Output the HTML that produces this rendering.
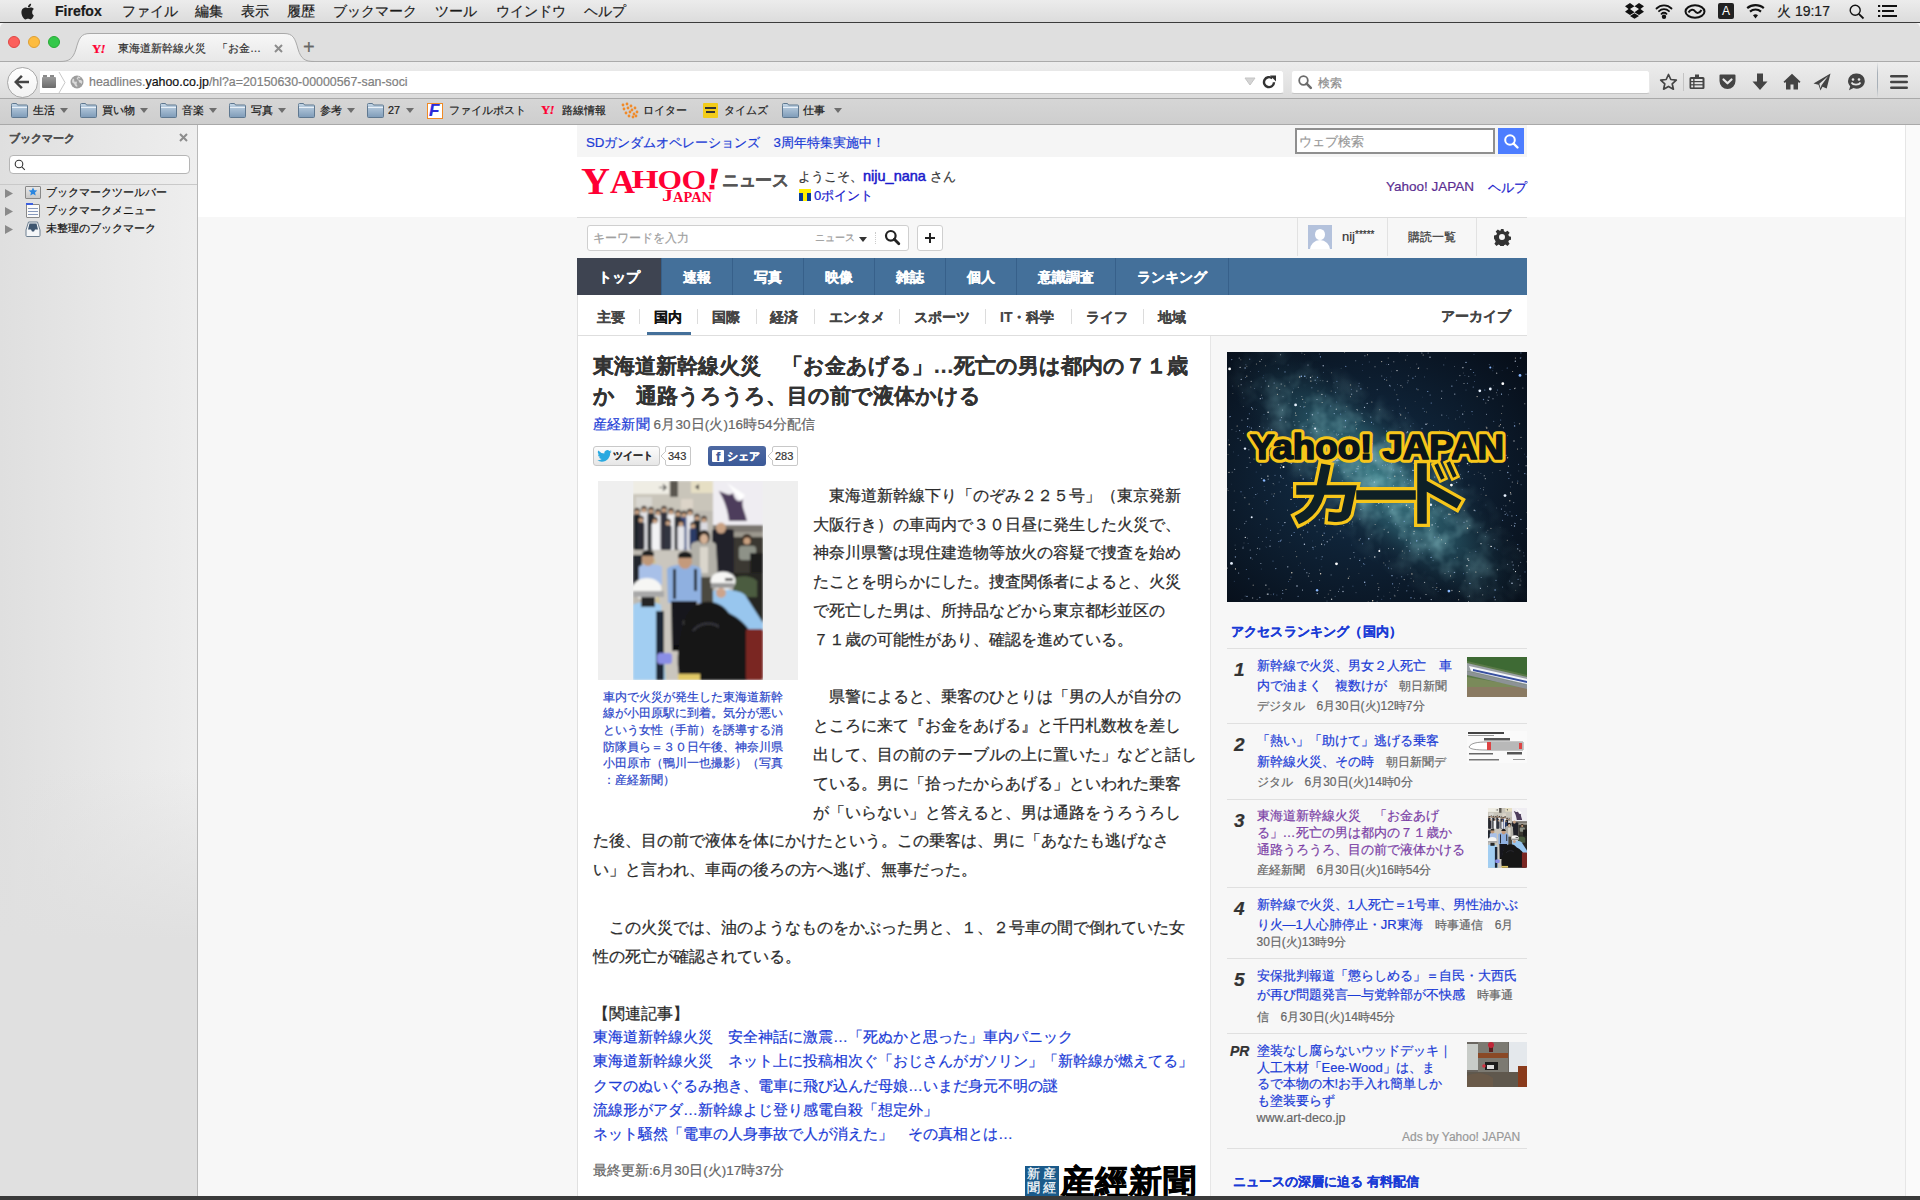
<!DOCTYPE html>
<html><head><meta charset="utf-8">
<style>
*{margin:0;padding:0;box-sizing:border-box}
html,body{width:1920px;height:1200px;overflow:hidden;background:#f7f7f7;font-family:"Liberation Sans",sans-serif;color:#333}
.a{position:absolute}
.t{position:absolute;white-space:nowrap}
.j{position:absolute;white-space:nowrap;text-align:justify;text-align-last:justify}
.t,.j{-webkit-text-stroke-width:0.2px}
/* menu bar */
#menubar{left:0;top:0;width:1920px;height:23px;background:linear-gradient(#ececec,#dcdcdc);border-bottom:1px solid #3b3b3b}
#menubar .t,#menubar .j{top:3px;font-size:14px;color:#1a1a1a;line-height:16px}
/* chrome */
#tabstrip{left:0;top:23px;width:1920px;height:39px;background:#dfdfdf;border-top-left-radius:5px;border-top-right-radius:5px}
#navbar{left:0;top:61px;width:1920px;height:38px;background:linear-gradient(#ededed,#dcdcdc);border-top:1px solid #b9b9b9;border-bottom:1px solid #a9a9a9}
#bmbar{left:0;top:99px;width:1920px;height:26px;background:linear-gradient(#d6d6d6,#cecece);border-bottom:1px solid #a9a9a9}
#sidebar{left:0;top:125px;width:198px;height:1071px;background:linear-gradient(rgba(224,224,224,0) 0,rgba(224,224,224,0) 60%,#e0e0e0 76%),linear-gradient(90deg,#dfdfdf,#eeeeee);border-right:1px solid #b9b9b9}
#bottom{left:0;top:1196px;width:1920px;height:4px;background:#3a3a3a}
#page{left:198px;top:125px;width:1707px;height:1071px;background:#f7f7f7;overflow:hidden}
#scroll{left:1905px;top:125px;width:15px;height:1071px;background:#fafafa;border-left:1px solid #e6e6e6}
</style></head><body>
<div id="menubar" class="a">
  <div class="t" style="left:55px;font-weight:bold">Firefox</div>
  <div class="j" style="left: 122px; width: 56px;">ファイル</div>
  <div class="j" style="left: 195px; width: 28px;">編集</div>
  <div class="j" style="left: 241px; width: 28px;">表示</div>
  <div class="j" style="left: 287px; width: 28px;">履歴</div>
  <div class="j" style="left: 333px; width: 84px;">ブックマーク</div>
  <div class="j" style="left: 435px; width: 42px;">ツール</div>
  <div class="j" style="left: 496px; width: 70px;">ウインドウ</div>
  <div class="j" style="left: 584px; width: 42px;">ヘルプ</div>
  <div class="j" style="left: 1777px; width: 52.94px;">火 19:17</div>
</div>
<div id="tabstrip" class="a"></div>
<div id="navbar" class="a"></div>
<div id="bmbar" class="a"></div>
<div id="sidebar" class="a"></div>

<!-- menubar icons -->
<svg class="a" style="left:19px;top:3px" width="16" height="17" viewBox="0 0 16 17"><path fill="#222" d="M13.2 9c0-2 1.6-2.9 1.7-3-1-1.4-2.4-1.6-2.9-1.6-1.2-.1-2.4.7-3 .7s-1.6-.7-2.6-.7C5 4.5 3.8 5.3 3.1 6.5 1.7 9 2.8 12.6 4.1 14.5c.7.9 1.4 2 2.4 1.9 1-.1 1.3-.6 2.5-.6s1.5.6 2.5.6 1.7-1 2.3-1.9c.7-1.1 1-2.1 1-2.2 0 0-2-.8-1.6-3.3zM11.3 3.2c.5-.7.9-1.6.8-2.5-.8 0-1.8.5-2.3 1.2-.5.6-1 1.5-.8 2.4.9.1 1.8-.4 2.3-1.1z"></path></svg>
<svg class="a" style="left:1625px;top:3px" width="19" height="17" viewBox="0 0 19 17"><path fill="#111" d="M5 0 0 3.3 3.5 6 0 8.8l5 3.3 4.5-2.8L5 6l4.5-2.8zM14 0 9.5 3.2 14 6l-4.5 3.3L14 12l5-3.2L15.5 6 19 3.3zM5 13l4.5 2.8L14 13l-4.5-2.8z"></path></svg>
<svg class="a" style="left:1655px;top:3px" width="18" height="17" viewBox="0 0 18 17"><g fill="none" stroke="#111" stroke-width="1.8" stroke-linecap="round"><path d="M1.5 5.5a10.5 10.5 0 0 1 15 0"></path><path d="M4 8.2a7 7 0 0 1 10 0"></path><path d="M6.5 10.8a3.5 3.5 0 0 1 5 0"></path></g><circle cx="9" cy="13.8" r="2.2" fill="#111"></circle></svg>
<svg class="a" style="left:1684px;top:4px" width="22" height="15" viewBox="0 0 22 15"><g fill="none" stroke="#111" stroke-width="2"><ellipse cx="11" cy="7.5" rx="9.5" ry="6.3"></ellipse><path d="M4.5 8.5c2-3.5 5-3.5 6.5-1.2s4.5 2.3 6.5-1.2"></path></g></svg>
<div class="a" style="left:1718px;top:3px;width:16px;height:16px;background:#222;border-radius:2px;color:#fff;font-size:12px;line-height:16px;text-align:center">A</div>
<svg class="a" style="left:1745px;top:3px" width="21" height="16" viewBox="0 0 21 16"><path fill="#111" d="M10.5 15.5 13 12.3a4 4 0 0 0-5 0zM10.5 7.6a7.4 7.4 0 0 1 4.8 1.8l1.4-1.7a9.7 9.7 0 0 0-12.4 0l1.4 1.7a7.4 7.4 0 0 1 4.8-1.8zM10.5 3.2c2.9 0 5.5 1 7.6 2.8l1.4-1.7A14 14 0 0 0 10.5 1a14 14 0 0 0-9 3.3L2.9 6a11.6 11.6 0 0 1 7.6-2.8z"></path></svg>
<svg class="a" style="left:1849px;top:4px" width="16" height="16" viewBox="0 0 16 16"><g fill="none" stroke="#111" stroke-width="1.4"><circle cx="6.2" cy="6.2" r="5"></circle><path d="M9.8 9.8 14.5 14.5" stroke-width="1.8"></path></g></svg>
<svg class="a" style="left:1878px;top:5px" width="20" height="12" viewBox="0 0 20 12"><g fill="#111"><rect x="0" y="0" width="2.2" height="2"></rect><rect x="0" y="5" width="2.2" height="2"></rect><rect x="0" y="10" width="2.2" height="2"></rect><rect x="4" y="0" width="15" height="2"></rect><rect x="4" y="5" width="12" height="2"></rect><rect x="4" y="10" width="15" height="2"></rect></g></svg>
<svg class="a" style="left:11px;top:103px" width="17" height="15" viewBox="0 0 17 15"><defs><linearGradient id="fg11" x1="0" y1="0" x2="0" y2="1"><stop offset="0" stop-color="#c4d6e6"></stop><stop offset="1" stop-color="#7e9bb8"></stop></linearGradient></defs><path d="M.5 2.5V1.5A1 1 0 0 1 1.5.5h4l1 1.5h9a1 1 0 0 1 1 1v10.5a1 1 0 0 1-1 1h-14a1 1 0 0 1-1-1z" fill="url(#fg11)" stroke="#5f7890" stroke-width="1"></path><path d="M1 4.5h15" stroke="#e8f0f8" stroke-width="1"></path></svg><div class="j" style="left: 33px; top: 104px; font-size: 10.8px; color: rgb(26, 26, 26); width: 22px;">生活</div><svg class="a" style="left:60px;top:108px" width="8" height="5" viewBox="0 0 8 5"><path d="M0 0h8L4 5z" fill="#6e6e6e"></path></svg><svg class="a" style="left:80px;top:103px" width="17" height="15" viewBox="0 0 17 15"><defs><linearGradient id="fg80" x1="0" y1="0" x2="0" y2="1"><stop offset="0" stop-color="#c4d6e6"></stop><stop offset="1" stop-color="#7e9bb8"></stop></linearGradient></defs><path d="M.5 2.5V1.5A1 1 0 0 1 1.5.5h4l1 1.5h9a1 1 0 0 1 1 1v10.5a1 1 0 0 1-1 1h-14a1 1 0 0 1-1-1z" fill="url(#fg80)" stroke="#5f7890" stroke-width="1"></path><path d="M1 4.5h15" stroke="#e8f0f8" stroke-width="1"></path></svg><div class="j" style="left: 102px; top: 104px; font-size: 10.8px; color: rgb(26, 26, 26); width: 33px;">買い物</div><svg class="a" style="left:140px;top:108px" width="8" height="5" viewBox="0 0 8 5"><path d="M0 0h8L4 5z" fill="#6e6e6e"></path></svg><svg class="a" style="left:160px;top:103px" width="17" height="15" viewBox="0 0 17 15"><defs><linearGradient id="fg160" x1="0" y1="0" x2="0" y2="1"><stop offset="0" stop-color="#c4d6e6"></stop><stop offset="1" stop-color="#7e9bb8"></stop></linearGradient></defs><path d="M.5 2.5V1.5A1 1 0 0 1 1.5.5h4l1 1.5h9a1 1 0 0 1 1 1v10.5a1 1 0 0 1-1 1h-14a1 1 0 0 1-1-1z" fill="url(#fg160)" stroke="#5f7890" stroke-width="1"></path><path d="M1 4.5h15" stroke="#e8f0f8" stroke-width="1"></path></svg><div class="j" style="left: 182px; top: 104px; font-size: 10.8px; color: rgb(26, 26, 26); width: 22px;">音楽</div><svg class="a" style="left:209px;top:108px" width="8" height="5" viewBox="0 0 8 5"><path d="M0 0h8L4 5z" fill="#6e6e6e"></path></svg><svg class="a" style="left:229px;top:103px" width="17" height="15" viewBox="0 0 17 15"><defs><linearGradient id="fg229" x1="0" y1="0" x2="0" y2="1"><stop offset="0" stop-color="#c4d6e6"></stop><stop offset="1" stop-color="#7e9bb8"></stop></linearGradient></defs><path d="M.5 2.5V1.5A1 1 0 0 1 1.5.5h4l1 1.5h9a1 1 0 0 1 1 1v10.5a1 1 0 0 1-1 1h-14a1 1 0 0 1-1-1z" fill="url(#fg229)" stroke="#5f7890" stroke-width="1"></path><path d="M1 4.5h15" stroke="#e8f0f8" stroke-width="1"></path></svg><div class="j" style="left: 251px; top: 104px; font-size: 10.8px; color: rgb(26, 26, 26); width: 22px;">写真</div><svg class="a" style="left:278px;top:108px" width="8" height="5" viewBox="0 0 8 5"><path d="M0 0h8L4 5z" fill="#6e6e6e"></path></svg><svg class="a" style="left:298px;top:103px" width="17" height="15" viewBox="0 0 17 15"><defs><linearGradient id="fg298" x1="0" y1="0" x2="0" y2="1"><stop offset="0" stop-color="#c4d6e6"></stop><stop offset="1" stop-color="#7e9bb8"></stop></linearGradient></defs><path d="M.5 2.5V1.5A1 1 0 0 1 1.5.5h4l1 1.5h9a1 1 0 0 1 1 1v10.5a1 1 0 0 1-1 1h-14a1 1 0 0 1-1-1z" fill="url(#fg298)" stroke="#5f7890" stroke-width="1"></path><path d="M1 4.5h15" stroke="#e8f0f8" stroke-width="1"></path></svg><div class="j" style="left: 320px; top: 104px; font-size: 10.8px; color: rgb(26, 26, 26); width: 22px;">参考</div><svg class="a" style="left:347px;top:108px" width="8" height="5" viewBox="0 0 8 5"><path d="M0 0h8L4 5z" fill="#6e6e6e"></path></svg><svg class="a" style="left:367px;top:103px" width="17" height="15" viewBox="0 0 17 15"><defs><linearGradient id="fg367" x1="0" y1="0" x2="0" y2="1"><stop offset="0" stop-color="#c4d6e6"></stop><stop offset="1" stop-color="#7e9bb8"></stop></linearGradient></defs><path d="M.5 2.5V1.5A1 1 0 0 1 1.5.5h4l1 1.5h9a1 1 0 0 1 1 1v10.5a1 1 0 0 1-1 1h-14a1 1 0 0 1-1-1z" fill="url(#fg367)" stroke="#5f7890" stroke-width="1"></path><path d="M1 4.5h15" stroke="#e8f0f8" stroke-width="1"></path></svg><div class="t" style="left:388px;top:104px;font-size:10.8px;color:#1a1a1a">27</div><svg class="a" style="left:406px;top:108px" width="8" height="5" viewBox="0 0 8 5"><path d="M0 0h8L4 5z" fill="#6e6e6e"></path></svg><svg class="a" style="left:782px;top:103px" width="17" height="15" viewBox="0 0 17 15"><defs><linearGradient id="fg782" x1="0" y1="0" x2="0" y2="1"><stop offset="0" stop-color="#c4d6e6"></stop><stop offset="1" stop-color="#7e9bb8"></stop></linearGradient></defs><path d="M.5 2.5V1.5A1 1 0 0 1 1.5.5h4l1 1.5h9a1 1 0 0 1 1 1v10.5a1 1 0 0 1-1 1h-14a1 1 0 0 1-1-1z" fill="url(#fg782)" stroke="#5f7890" stroke-width="1"></path><path d="M1 4.5h15" stroke="#e8f0f8" stroke-width="1"></path></svg><div class="j" style="left: 803px; top: 104px; font-size: 10.8px; color: rgb(26, 26, 26); width: 22px;">仕事</div><svg class="a" style="left:834px;top:108px" width="8" height="5" viewBox="0 0 8 5"><path d="M0 0h8L4 5z" fill="#6e6e6e"></path></svg><div class="a" style="left:427px;top:103px;width:16px;height:16px;background:#fff;border:1.5px solid #f08a24"></div><div class="t" style="left:429px;top:101px;font-size:17px;font-weight:bold;color:#2a2ad8;font-style:italic">F</div><div class="j" style="left: 449px; top: 104px; font-size: 10.8px; color: rgb(26, 26, 26); width: 77px;">ファイルポスト</div><div class="t" style="left:541px;top:102px;font-family:'Liberation Serif';font-weight:bold;font-size:13px;color:#ff0033;letter-spacing:-1px">Y<i>!</i></div><div class="j" style="left: 562px; top: 104px; font-size: 10.8px; color: rgb(26, 26, 26); width: 44px;">路線情報</div><svg class="a" style="left:621px;top:102px" width="18" height="17" viewBox="0 0 18 17"><circle cx="2" cy="3" r="1.4" fill="#f08a2a"></circle><circle cx="6" cy="2" r="1.4" fill="#f08a2a"></circle><circle cx="10" cy="4" r="1.4" fill="#f08a2a"></circle><circle cx="3" cy="7" r="1.4" fill="#f08a2a"></circle><circle cx="7" cy="6" r="1.4" fill="#f08a2a"></circle><circle cx="11" cy="8" r="1.4" fill="#f08a2a"></circle><circle cx="14" cy="6" r="1.4" fill="#f08a2a"></circle><circle cx="5" cy="11" r="1.4" fill="#f08a2a"></circle><circle cx="9" cy="10" r="1.4" fill="#f08a2a"></circle><circle cx="13" cy="12" r="1.4" fill="#f08a2a"></circle><circle cx="16" cy="10" r="1.4" fill="#f08a2a"></circle><circle cx="8" cy="14" r="1.4" fill="#f08a2a"></circle><circle cx="12" cy="15" r="1.4" fill="#f08a2a"></circle><circle cx="15" cy="14" r="1.4" fill="#f08a2a"></circle></svg><div class="j" style="left: 643px; top: 104px; font-size: 10.8px; color: rgb(26, 26, 26); width: 44px;">ロイター</div><div class="a" style="left:703px;top:103px;width:15px;height:15px;background:#f2cc1a;border-radius:1px"></div><div class="a" style="left:705px;top:107px;width:11px;height:2px;background:#333"></div><div class="a" style="left:706px;top:111px;width:9px;height:2px;background:#333"></div><div class="j" style="left: 724px; top: 104px; font-size: 10.8px; color: rgb(26, 26, 26); width: 44px;">タイムズ</div>
<div class="j" style="left: 9px; top: 131px; font-size: 11px; color: rgb(80, 80, 80); font-weight: bold; width: 66px;">ブックマーク</div>
<svg class="a" style="left:179px;top:133px" width="9" height="9" viewBox="0 0 9 9"><path d="M1 1l7 7M8 1 1 8" stroke="#8c8c8c" stroke-width="2"></path></svg>
<div class="a" style="left:9px;top:155px;width:181px;height:19px;background:#fff;border:1px solid #b5b5b5;border-radius:4px"></div>
<svg class="a" style="left:14px;top:159px" width="12" height="12" viewBox="0 0 12 12"><g fill="none" stroke="#333" stroke-width="1.1"><circle cx="5" cy="5" r="3.8"></circle><path d="M7.8 7.8l3 3"></path></g></svg>
<div class="a" style="left:0;top:184px;width:197px;height:1px;background:#c9c9c9"></div>
<svg class="a" style="left:5px;top:189px" width="8" height="9" viewBox="0 0 8 9"><path d="M0 0l8 4.5L0 9z" fill="#8a8a8a"></path></svg><div class="a" style="left:25px;top:186px;width:16px;height:13px;background:linear-gradient(#e8e8e8,#c8c8c8);border:1px solid #888;border-radius:1px"></div><svg class="a" style="left:28px;top:187px" width="10" height="10" viewBox="0 0 10 10"><path d="M5 .5l1.3 2.8 3 .3-2.3 2 .7 3-2.7-1.6-2.7 1.6.7-3-2.3-2 3-.3z" fill="#2a86e0"></path></svg><div class="j" style="left: 46px; top: 186px; font-size: 10.8px; color: rgb(17, 17, 17); width: 121px;">ブックマークツールバー</div><svg class="a" style="left:5px;top:207px" width="8" height="9" viewBox="0 0 8 9"><path d="M0 0l8 4.5L0 9z" fill="#8a8a8a"></path></svg><div class="a" style="left:26px;top:204px;width:14px;height:14px;background:#fafafa;border:1px solid #888;border-radius:1px"></div><div class="a" style="left:26px;top:203px;width:7px;height:2px;background:#3b5fe0"></div><div class="a" style="left:28px;top:208px;width:10px;height:1px;background:#8899bb"></div><div class="a" style="left:28px;top:211px;width:10px;height:1px;background:#8899bb"></div><div class="a" style="left:28px;top:214px;width:10px;height:1px;background:#8899bb"></div><div class="j" style="left: 46px; top: 204px; font-size: 10.8px; color: rgb(17, 17, 17); width: 110px;">ブックマークメニュー</div><svg class="a" style="left:5px;top:225px" width="8" height="9" viewBox="0 0 8 9"><path d="M0 0l8 4.5L0 9z" fill="#8a8a8a"></path></svg><svg class="a" style="left:25px;top:221px" width="16" height="16" viewBox="0 0 16 16"><path d="M1 9l2.5-8h9L15 9v5.5a1 1 0 0 1-1 1H2a1 1 0 0 1-1-1z" fill="#f4f6f8" stroke="#6d7f90"></path><path d="M3 8.5h3l1 2h2l1-2h3L11.5 2.5h-7z" fill="#3e5670"></path></svg><div class="j" style="left: 46px; top: 222px; font-size: 10.8px; color: rgb(17, 17, 17); width: 110px;">未整理のブックマーク</div>
<!-- traffic lights -->
<div class="a" style="left:8px;top:36px;width:12px;height:12px;border-radius:50%;background:#fc605c;border:0.5px solid #df4744"></div>
<div class="a" style="left:28px;top:36px;width:12px;height:12px;border-radius:50%;background:#fdbc40;border:0.5px solid #de9f34"></div>
<div class="a" style="left:48px;top:36px;width:12px;height:12px;border-radius:50%;background:#34c84a;border:0.5px solid #27aa35"></div>
<!-- tab -->
<svg class="a" style="left:60px;top:32px" width="254" height="31" viewBox="0 0 254 31"><defs><linearGradient id="tg" x1="0" y1="0" x2="0" y2="1"><stop offset="0" stop-color="#f7f7f7"></stop><stop offset="1" stop-color="#e8e8e8"></stop></linearGradient></defs><path d="M0 29.5C9 29.5 13 27 16 17 19 6 21 1.5 30 1.5H224C233 1.5 235 6 238 17 241 27 245 29.5 254 29.5" fill="url(#tg)" stroke="#a9a9a9" stroke-width="1"></path></svg>
<div class="a" style="left:0;top:61px;width:60px;height:1px;background:#ababab"></div>
<div class="a" style="left:314px;top:61px;width:1606px;height:1px;background:#ababab"></div>
<div class="t" style="left:92px;top:41px;font-family:'Liberation Serif';font-weight:bold;font-size:13px;color:#ff0033;letter-spacing:-1px">Y<i>!</i></div>
<div class="j" style="left:118px;top:41px;width:143px;font-size:11px;color:#333">東海道新幹線火災　「お金…</div>
<svg class="a" style="left:274px;top:44px" width="9" height="9" viewBox="0 0 9 9"><path d="M1 1l7 7M8 1 1 8" stroke="#8c8c8c" stroke-width="2"></path></svg>
<div class="t" style="left:303px;top:36px;font-size:20px;color:#666">+</div>
<!-- nav -->
<div class="a" style="left:40px;top:70px;width:1244px;height:24px;background:#fff;border:1px solid #e8e8e8;border-bottom-color:#c4c4c4;border-radius:0 3px 3px 0;border-left:none"></div>
<div class="a" style="left:7px;top:67px;width:31px;height:31px;border-radius:50%;background:linear-gradient(#fff,#f2f2f2);border:1px solid #a8a8a8"></div>
<svg class="a" style="left:13px;top:74px" width="17" height="16" viewBox="0 0 17 16"><path fill="#444" d="M8 1 1 8l7 7 1.8-1.8L5.5 9.3H16V6.7H5.5l4.3-3.9z"></path></svg>
<div class="a" style="left:42px;top:77px;width:14px;height:11px;background:linear-gradient(#9a9a9a,#6a6a6a);border-radius:1px"></div>
<div class="a" style="left:43px;top:75px;width:4px;height:2px;background:#8a8a8a"></div><div class="a" style="left:50px;top:75px;width:4px;height:2px;background:#8a8a8a"></div>
<svg class="a" style="left:58px;top:71px" width="8" height="23" viewBox="0 0 8 23"><path d="M1 1l6 10.5L1 22" fill="none" stroke="#c8c8c8"></path></svg>
<svg class="a" style="left:70px;top:75px" width="14" height="14" viewBox="0 0 14 14"><circle cx="7" cy="7" r="6.5" fill="#9d9d9d"></circle><path fill="#d9d9d9" d="M3 3.5c1 .3 1.5 1 1.2 2-.3.8.8 1.5 1.5 1.2.9-.4 1.5.5 1.1 1.3-.4.9-.3 1.8.5 2.4.4.3.2 1-.3 1.3-1.2-.2-2.2-1-2.5-2.2-.2-.8-1-1.3-1.8-1.5C2 7.5 1.7 5 3 3.5zM8 1.2c1 .3 2.2 1 2.6 1.6-.3.6-1 .7-1.6.5-.7-.2-1.2.4-1 1C8.3 5 9.5 5 10.3 4.9c.9 0 1.6.6 2 1.4.1 1-.2 2-.7 2.8-.5-.6-.8-1.4-1.6-1.4-.9 0-1.2-1-1.2-1.7C8.6 5 7.7 4.6 7 4.2 6.4 3.7 6.8 2.6 7.4 2.5z"></path></svg>
<div class="t" style="left:89px;top:75px;font-size:12.4px;color:#808080">headlines.<span style="color:#111">yahoo.co.jp</span>/hl?a=20150630-00000567-san-soci</div>
<svg class="a" style="left:1244px;top:77px" width="12" height="9" viewBox="0 0 12 9"><path d="M1 1h10L6 8z" fill="#d4d4d4" stroke="#c4c4c4" stroke-width="1"></path></svg>
<svg class="a" style="left:1261px;top:74px" width="16" height="16" viewBox="0 0 16 16"><path d="M13 8.3A5 5 0 1 1 11.2 4.3" fill="none" stroke="#333" stroke-width="2.4"></path><path fill="#333" d="M9 1.5h6v6z"></path></svg>
<div class="a" style="left:1291px;top:70px;width:359px;height:24px;background:#fff;border:1px solid #e8e8e8;border-bottom-color:#c4c4c4;border-radius:3px"></div>
<svg class="a" style="left:1297px;top:74px" width="16" height="16" viewBox="0 0 16 16"><g fill="none" stroke="#6b6b6b"><circle cx="6.5" cy="6.5" r="4.3" stroke-width="1.8"></circle><path d="M9.6 9.6l4.2 4.2" stroke-width="2.6" stroke-linecap="round"></path></g></svg>
<div class="j" style="left: 1318px; top: 75px; font-size: 12px; color: rgb(141, 141, 141); width: 24px;">検索</div>
<!-- toolbar icons -->
<svg class="a" style="left:1659px;top:73px" width="19" height="18" viewBox="0 0 19 18"><path d="M9.5 1.5l2.3 5 5.5.6-4.1 3.7 1.2 5.4-4.9-2.8-4.9 2.8 1.2-5.4L1.7 7.1l5.5-.6z" fill="none" stroke="#444" stroke-width="1.7" stroke-linejoin="round"></path></svg>
<div class="a" style="left:1683px;top:73px;width:1px;height:18px;background:#c4c4c4"></div>
<svg class="a" style="left:1689px;top:73px" width="16" height="17" viewBox="0 0 16 17"><path fill="#444" d="M2 4h12a1.5 1.5 0 0 1 1.5 1.5v9A1.5 1.5 0 0 1 14 16H2A1.5 1.5 0 0 1 .5 14.5v-9A1.5 1.5 0 0 1 2 4zM6 1.5h4V4H6z"></path><g fill="#e6e6e6"><rect x="2.2" y="6" width="2" height="2"></rect><rect x="5.5" y="6" width="8" height="2"></rect><rect x="2.2" y="9.2" width="2" height="2"></rect><rect x="5.5" y="9.2" width="8" height="2"></rect><rect x="2.2" y="12.4" width="2" height="2"></rect><rect x="5.5" y="12.4" width="8" height="2"></rect></g></svg>
<svg class="a" style="left:1719px;top:74px" width="17" height="16" viewBox="0 0 17 16"><path fill="#444" d="M1.5 .5h14A1 1 0 0 1 16.5 1.5V7A8 8 0 0 1 .5 7V1.5a1 1 0 0 1 1-1z"></path><path d="M4.5 5.5l4 3.8 4-3.8" fill="none" stroke="#e8e8e8" stroke-width="2.2" stroke-linecap="round" stroke-linejoin="round"></path></svg>
<svg class="a" style="left:1752px;top:73px" width="16" height="18" viewBox="0 0 16 18"><path fill="#444" d="M5 .5h6v8h4.5L8 17 .5 8.5H5z"></path></svg>
<svg class="a" style="left:1783px;top:73px" width="18" height="17" viewBox="0 0 18 17"><path fill="#444" d="M9 .8 .5 8.8l1.3 1.3L3 9v7.5h4.5V11.5h3v5H15V9l1.2 1.1 1.3-1.3z"></path></svg>
<svg class="a" style="left:1813px;top:73px" width="18" height="18" viewBox="0 0 18 18"><path fill="#444" d="M17.5.5.5 10.5l5 1.2 2 5.8 2-3.8 4.2 1.8zM6.3 10.8 15 3.2 8.5 12.2 7.6 15.2z"></path></svg>
<svg class="a" style="left:1847px;top:73px" width="18" height="18" viewBox="0 0 18 18"><path fill="#444" d="M9 .5A8 7.6 0 0 0 1 8.1c0 2 .8 3.7 2.2 5.1L2 17.3l4.5-2.3A8 7.6 0 1 0 9 .5z"></path><circle cx="6" cy="6.5" r="1.3" fill="#e6e6e6"></circle><circle cx="12" cy="6.5" r="1.3" fill="#e6e6e6"></circle><path d="M4.5 9.5c1.5 2.8 7.5 2.8 9 0" fill="none" stroke="#e6e6e6" stroke-width="1.6"></path></svg>
<div class="a" style="left:1877px;top:62px;width:1px;height:36px;background:linear-gradient(rgba(180,180,180,0),#a8b0b8 30%,#a8b0b8 70%,rgba(180,180,180,0))"></div>
<svg class="a" style="left:1890px;top:75px" width="18" height="14" viewBox="0 0 18 14"><g fill="#444"><rect x="0" y="0" width="18" height="2.6" rx="1.3"></rect><rect x="0" y="5.7" width="18" height="2.6" rx="1.3"></rect><rect x="0" y="11.4" width="18" height="2.6" rx="1.3"></rect></g></svg>

<div id="page" class="a"></div>

<!-- PAGE -->
<div class="a" style="left:198px;top:125px;width:1707px;height:92px;background:#fff"></div>
<div class="a" style="left:577px;top:125px;width:950px;height:32px;background:#f5f5f5"></div>
<div class="j" style="left:586px;top:134px;width:295px;font-size:13.3px;color:#1a3bd6">SDガンダムオペレーションズ　3周年特集実施中！</div>
<div class="a" style="left:1295px;top:128px;width:200px;height:26px;background:#fff;border:2px solid #8f8f8f"></div>
<div class="j" style="left: 1299px; top: 133px; font-size: 13px; color: rgb(153, 153, 153); width: 65px;">ウェブ検索</div>
<div class="a" style="left:1498px;top:128px;width:26px;height:26px;background:#4d7dff"></div>
<svg class="a" style="left:1503px;top:133px" width="17" height="17" viewBox="0 0 17 17"><g fill="none" stroke="#fff"><circle cx="7" cy="7" r="4.8" stroke-width="2"></circle><path d="M10.5 10.5l4 4" stroke-width="2.4" stroke-linecap="round"></path></g></svg>
<!-- logo -->
<svg class="a" style="left:577px;top:160px" width="150" height="50" viewBox="577 160 150 50"><g fill="#ff0033" font-family="Liberation Serif" font-weight="bold">
<text x="581" y="193.7" font-size="38" textLength="29" lengthAdjust="spacingAndGlyphs">Y</text>
<text x="610" y="192.5" font-size="33" textLength="25" lengthAdjust="spacingAndGlyphs">A</text>
<text x="631.5" y="188" font-size="26" textLength="27" lengthAdjust="spacingAndGlyphs">H</text>
<text x="657.5" y="188.5" font-size="27" textLength="24.5" lengthAdjust="spacingAndGlyphs">O</text>
<text x="681.5" y="188.5" font-size="27" textLength="24.5" lengthAdjust="spacingAndGlyphs">O</text>
<path d="M711.5 168.8h6.7l-4.2 14.5h-3z"></path><rect x="709.6" y="184.8" width="4.8" height="4.6"></rect>
<text x="662" y="201" font-size="17" textLength="11" lengthAdjust="spacingAndGlyphs">J</text>
<text x="673" y="201.5" font-size="15" textLength="39" lengthAdjust="spacingAndGlyphs">APAN</text>
</g></svg>
<div class="j" style="left: 722px; top: 172px; font-size: 17px; line-height: 18px; font-weight: bold; color: rgb(85, 85, 85); letter-spacing: -0.5px; width: 66px;">ニュース</div>
<div class="j" style="left: 798px; top: 168px; font-size: 13.2px; color: rgb(51, 51, 51); width: 157.58px;">ようこそ、<span style="color:#1a1acc;font-size:14.5px;-webkit-text-stroke-width:0.5px">niju_nana</span> さん</div>
<div class="a" style="left:799px;top:189px;width:12px;height:12px;background:#ffee00"></div>
<div class="a" style="left:799px;top:193px;width:4px;height:8px;background:#0a3c9a"></div><div class="a" style="left:807px;top:193px;width:4px;height:8px;background:#0a3c9a"></div>
<div class="j" style="left: 814px; top: 187px; font-size: 13px; color: rgb(26, 26, 204); width: 59.23px;">0ポイント</div>
<div class="t" style="left:1386px;top:179px;font-size:13.5px;color:#5a2d91">Yahoo! JAPAN</div>
<div class="j" style="left: 1488px; top: 179px; font-size: 13px; color: rgb(26, 26, 204); width: 39px;">ヘルプ</div>
<!-- search row -->
<div class="a" style="left:577px;top:217px;width:950px;height:1px;background:#dcdcdc"></div>
<div class="a" style="left:587px;top:225px;width:322px;height:26px;background:#fff;border:1px solid #cfcfcf;border-radius:3px"></div>
<div class="j" style="left: 593px; top: 231px; font-size: 11.8px; color: rgb(160, 160, 160); width: 96px;">キーワードを入力</div>
<div class="j" style="left: 815px; top: 232px; font-size: 9.5px; color: rgb(154, 154, 154); width: 40px;">ニュース</div>
<svg class="a" style="left:859px;top:237px" width="8" height="5" viewBox="0 0 8 5"><path d="M0 0h8L4 5z" fill="#333"></path></svg>
<div class="a" style="left:875px;top:232px;width:1px;height:12px;border-left:1px dotted #cccccc"></div>
<svg class="a" style="left:884px;top:229px" width="17" height="17" viewBox="0 0 17 17"><g fill="none" stroke="#222"><circle cx="6.8" cy="6.8" r="4.8" stroke-width="2.2"></circle><path d="M10.3 10.3l4.5 4.5" stroke-width="2.8" stroke-linecap="round"></path></g></svg>
<div class="a" style="left:917px;top:225px;width:26px;height:26px;background:#fff;border:1px solid #cfcfcf;border-radius:3px"></div>
<div class="a" style="left:925px;top:237px;width:10px;height:2px;background:#222"></div><div class="a" style="left:929px;top:233px;width:2px;height:10px;background:#222"></div>
<div class="a" style="left:1297px;top:218px;width:1px;height:38px;background:#e2e2e2"></div>
<div class="a" style="left:1387px;top:218px;width:1px;height:38px;background:#e2e2e2"></div>
<div class="a" style="left:1476px;top:218px;width:1px;height:38px;background:#e2e2e2"></div>
<div class="a" style="left:1308px;top:225px;width:24px;height:24px;background:#b4c2dc;overflow:hidden"><div class="a" style="left:7px;top:4px;width:10px;height:11px;border-radius:50%;background:#fff"></div><div class="a" style="left:2px;top:15px;width:20px;height:14px;border-radius:10px 10px 0 0;background:#fff"></div></div>
<div class="t" style="left:1342px;top:229px;font-size:13px;color:#333">nij<span style="font-size:10px;vertical-align:3px">*****</span></div>
<div class="j" style="left: 1408px; top: 230px; font-size: 11.7px; color: rgb(51, 51, 51); width: 48px;">購読一覧</div>
<svg class="a" style="left:1493px;top:228px" width="18" height="18" viewBox="0 0 18 18"><path fill="#333" fill-rule="evenodd" d="M7.5 1h3l.5 2.3 1.5.7 2-1.3 2.1 2.1-1.3 2 .7 1.5 2.3.5v3l-2.3.5-.7 1.5 1.3 2-2.1 2.1-2-1.3-1.5.7-.5 2.3h-3l-.5-2.3-1.5-.7-2 1.3-2.1-2.1 1.3-2-.7-1.5L1 10.5v-3l2.3-.5.7-1.5-1.3-2 2.1-2.1 2 1.3 1.5-.7zM9 6a3 3 0 1 0 0 6 3 3 0 0 0 0-6z"></path></svg>
<!-- nav -->
<div class="a" style="left:577px;top:258px;width:950px;height:37px;background:#44709a"></div>
<div class="a" style="left:577px;top:258px;width:84px;height:37px;background:#3e4451"></div>
<div class="j" style="left: 598px; top: 269px; width: 42px; font-size: 14px; font-weight: bold; color: rgb(255, 255, 255);">トップ</div><div class="a" style="left:661px;top:258px;width:1px;height:37px;background:#37608a"></div><div class="j" style="left: 682.5px; top: 269px; width: 28px; font-size: 14px; font-weight: bold; color: rgb(255, 255, 255);">速報</div><div class="a" style="left:732px;top:258px;width:1px;height:37px;background:#37608a"></div><div class="j" style="left: 753.5px; top: 269px; width: 28px; font-size: 14px; font-weight: bold; color: rgb(255, 255, 255);">写真</div><div class="a" style="left:803px;top:258px;width:1px;height:37px;background:#37608a"></div><div class="j" style="left: 824.5px; top: 269px; width: 28px; font-size: 14px; font-weight: bold; color: rgb(255, 255, 255);">映像</div><div class="a" style="left:874px;top:258px;width:1px;height:37px;background:#37608a"></div><div class="j" style="left: 895.5px; top: 269px; width: 28px; font-size: 14px; font-weight: bold; color: rgb(255, 255, 255);">雑誌</div><div class="a" style="left:945px;top:258px;width:1px;height:37px;background:#37608a"></div><div class="j" style="left: 966.5px; top: 269px; width: 28px; font-size: 14px; font-weight: bold; color: rgb(255, 255, 255);">個人</div><div class="a" style="left:1016px;top:258px;width:1px;height:37px;background:#37608a"></div><div class="j" style="left: 1037.5px; top: 269px; width: 56px; font-size: 14px; font-weight: bold; color: rgb(255, 255, 255);">意識調査</div><div class="a" style="left:1115px;top:258px;width:1px;height:37px;background:#37608a"></div><div class="j" style="left: 1136.5px; top: 269px; width: 70px; font-size: 14px; font-weight: bold; color: rgb(255, 255, 255);">ランキング</div><div class="a" style="left:1228px;top:258px;width:1px;height:37px;background:#37608a"></div><div class="a" style="left:577px;top:295px;width:634px;height:40px;background:#fff"></div><div class="a" style="left:1211px;top:295px;width:316px;height:40px;background:#fff"></div><div class="j" style="left: 597px; top: 309px; font-size: 14px; font-weight: bold; color: rgb(68, 68, 68); width: 28px;">主要</div><div class="j" style="left: 654px; top: 309px; font-size: 14px; font-weight: bold; color: rgb(17, 17, 17); width: 28px;">国内</div><div class="j" style="left: 712px; top: 309px; font-size: 14px; font-weight: bold; color: rgb(68, 68, 68); width: 28px;">国際</div><div class="j" style="left: 770px; top: 309px; font-size: 14px; font-weight: bold; color: rgb(68, 68, 68); width: 28px;">経済</div><div class="j" style="left: 829px; top: 309px; font-size: 14px; font-weight: bold; color: rgb(68, 68, 68); width: 56px;">エンタメ</div><div class="j" style="left: 914px; top: 309px; font-size: 14px; font-weight: bold; color: rgb(68, 68, 68); width: 56px;">スポーツ</div><div class="j" style="left: 1000px; top: 309px; font-size: 14px; font-weight: bold; color: rgb(68, 68, 68); width: 54.45px;">IT・科学</div><div class="j" style="left: 1086px; top: 309px; font-size: 14px; font-weight: bold; color: rgb(68, 68, 68); width: 42px;">ライフ</div><div class="j" style="left: 1158px; top: 309px; font-size: 14px; font-weight: bold; color: rgb(68, 68, 68); width: 28px;">地域</div><div class="a" style="left:639px;top:309px;width:1px;height:15px;background:#dcdcdc"></div><div class="a" style="left:697px;top:309px;width:1px;height:15px;background:#dcdcdc"></div><div class="a" style="left:756px;top:309px;width:1px;height:15px;background:#dcdcdc"></div><div class="a" style="left:814px;top:309px;width:1px;height:15px;background:#dcdcdc"></div><div class="a" style="left:899px;top:309px;width:1px;height:15px;background:#dcdcdc"></div><div class="a" style="left:985px;top:309px;width:1px;height:15px;background:#dcdcdc"></div><div class="a" style="left:1071px;top:309px;width:1px;height:15px;background:#dcdcdc"></div><div class="a" style="left:1143px;top:309px;width:1px;height:15px;background:#dcdcdc"></div><div class="a" style="left:647px;top:332px;width:44px;height:4px;background:#44709a"></div><div class="j" style="left: 1441px; top: 308px; font-size: 14px; font-weight: bold; color: rgb(68, 68, 68); width: 70px;">アーカイブ</div><div class="a" style="left:577px;top:335px;width:950px;height:1px;background:#dedede"></div><div class="a" style="left:577px;top:336px;width:634px;height:860px;background:#fff;border-left:1px solid #e0e0e0;border-right:1px solid #e6e6e6"></div><div class="a" style="left:577px;top:295px;width:1px;height:41px;background:#e0e0e0"></div>
<!--ARTICLE-->
<div class="j" style="left:593px;top:350.5px;width:593.6px;font-size:21.2px;line-height:30px;color:#333;font-weight:bold">東海道新幹線火災　「お金あげる」…死亡の男は都内の７１歳</div>
<div class="j" style="left:593px;top:380.5px;width:381.6px;font-size:21.2px;line-height:30px;color:#333;font-weight:bold">か　通路うろうろ、目の前で液体かける</div>
<div class="j" style="left:593px;top:417.0px;width:222.0px;font-size:13.5px;line-height:16px;color:#666;"><span style="color:#1a3bd6">産経新聞</span> <span style="color:#666">6月30日(火)16時54分配信</span></div>
<div class="a" style="left:593px;top:446px;width:67px;height:20px;border:1px solid #c8c8c8;border-radius:3px;background:linear-gradient(#fdfdfd,#e6e6e6)"></div>
<svg class="a" style="left:597px;top:450px" width="15" height="12" viewBox="0 0 24 20"><path fill="#2aa9e0" d="M24 2.4a9.8 9.8 0 0 1-2.8.8A4.9 4.9 0 0 0 23.3.5a9.9 9.9 0 0 1-3.1 1.2A4.9 4.9 0 0 0 11.8 6 14 14 0 0 1 1.7.9a4.9 4.9 0 0 0 1.5 6.6A4.9 4.9 0 0 1 1 6.9a4.9 4.9 0 0 0 3.9 4.8 4.9 4.9 0 0 1-2.2.1 4.9 4.9 0 0 0 4.6 3.4A9.9 9.9 0 0 1 0 17.2 14 14 0 0 0 7.5 19.4c9.1 0 14-7.5 14-14v-.6A10 10 0 0 0 24 2.4z"></path></svg>
<div class="j" style="left: 613px; top: 449px; font-size: 10.4px; line-height: 14px; color: rgb(51, 51, 51); font-weight: bold; width: 40px;">ツイート</div>
<div class="a" style="left:665px;top:446px;width:26px;height:20px;border:1px solid #c8c8c8;border-radius:2px;background:#fff"></div>
<svg class="a" style="left:660px;top:451px" width="6" height="10" viewBox="0 0 6 10"><path d="M6 0 1 5l5 5" fill="#fff" stroke="#c8c8c8"></path></svg>
<div class="t" style="left:668px;top:449.0px;font-size:11px;line-height:14px;color:#333;">343</div>
<div class="a" style="left:708px;top:446px;width:58px;height:20px;border-radius:3px;background:linear-gradient(#4e69a2,#3b5998)"></div>
<div class="a" style="left:712px;top:450px;width:12px;height:12px;background:#fff;border-radius:1px"></div>
<div class="t" style="left:716px;top:450.0px;font-size:13px;line-height:14px;color:#3b5998;font-weight:bold"><b>f</b></div>
<div class="j" style="left: 727px; top: 448.5px; font-size: 10.8px; line-height: 14px; color: rgb(255, 255, 255); font-weight: bold; width: 33px;">シェア</div>
<div class="a" style="left:772px;top:446px;width:26px;height:20px;border:1px solid #c8c8c8;border-radius:2px;background:#fff"></div>
<svg class="a" style="left:767px;top:451px" width="6" height="10" viewBox="0 0 6 10"><path d="M6 0 1 5l5 5" fill="#fff" stroke="#c8c8c8"></path></svg>
<div class="t" style="left:775px;top:449.0px;font-size:11px;line-height:14px;color:#333;">283</div>
<div class="a" style="left:598px;top:481px;width:200px;height:199px;background:#efefef"></div>
<svg class="a" style="left:633px;top:481px" width="130" height="199" viewBox="0 0 130 199"><defs><filter id="bl" x="-5%" y="-5%" width="110%" height="110%"><feGaussianBlur stdDeviation="0.8"></feGaussianBlur></filter><clipPath id="pc"><rect width="130" height="199"></rect></clipPath></defs>
<g clip-path="url(#pc)"><g id="photoG" filter="url(#bl)">
<rect width="130" height="199" fill="#bdb9b1"></rect>
<rect width="80" height="30" fill="#c9c5ba"></rect>
<rect x="0" y="0" width="36" height="13" fill="#efede4"></rect><path d="M26 6.5h7m-3-3 3 3-3 3" stroke="#222" stroke-width="1.2" fill="none"></path>
<rect x="37" y="0" width="8" height="16" fill="#5a5650"></rect><rect x="58" y="0" width="22" height="12" fill="#e6dfc4"></rect><path d="M62 6l4-3v6z" fill="#333"></path>
<rect x="3" y="16" width="16" height="12" fill="#d8d6d0"></rect><rect x="48" y="18" width="12" height="10" fill="#dcd4c8"></rect>
<rect x="80" y="0" width="50" height="45" fill="#efedf2"></rect><path d="M86 10c4 8 8 14 10 30h18c-2-10-6-14-4-22-4 4-8 2-10-6-4 4-8 0-14-2z" fill="#4e3c5c"></path><path d="M94 2l18 12-4 6z" fill="#fff"></path>
<rect x="80" y="44" width="50" height="7" fill="#7a7670"></rect><rect x="80" y="51" width="50" height="26" fill="#9c988e"></rect>
<rect x="18" y="70" width="56" height="129" fill="#cac6be"></rect>
<path d="M22 78l12 121h-3L19 78z" fill="#d6c170" opacity="0.55"></path>
<rect x="0.5" y="33" width="7" height="36" rx="2" fill="#1f2228"></rect><ellipse cx="4" cy="30" rx="2.8" ry="3.3" fill="#2a2420"></ellipse><ellipse cx="4" cy="31.2" rx="2.3" ry="2.2" fill="#c9a284"></ellipse><rect x="7.5" y="31" width="7" height="38" rx="2" fill="#e4e4e8"></rect><ellipse cx="11" cy="28" rx="2.8" ry="3.3" fill="#2a2420"></ellipse><ellipse cx="11" cy="29.2" rx="2.3" ry="2.2" fill="#c9a284"></ellipse><rect x="14.5" y="32" width="7" height="37" rx="2" fill="#262a32"></rect><ellipse cx="18" cy="29" rx="2.8" ry="3.3" fill="#2a2420"></ellipse><ellipse cx="18" cy="30.2" rx="2.3" ry="2.2" fill="#c9a284"></ellipse><rect x="21.5" y="34" width="7" height="35" rx="2" fill="#eeeef0"></rect><ellipse cx="25" cy="31" rx="2.8" ry="3.3" fill="#2a2420"></ellipse><ellipse cx="25" cy="32.2" rx="2.3" ry="2.2" fill="#c9a284"></ellipse><rect x="27.5" y="31" width="7" height="38" rx="2" fill="#30333c"></rect><ellipse cx="31" cy="28" rx="2.8" ry="3.3" fill="#2a2420"></ellipse><ellipse cx="31" cy="29.2" rx="2.3" ry="2.2" fill="#c9a284"></ellipse><rect x="34.5" y="33" width="7" height="36" rx="2" fill="#f0f0f2"></rect><ellipse cx="38" cy="30" rx="2.8" ry="3.3" fill="#2a2420"></ellipse><ellipse cx="38" cy="31.2" rx="2.3" ry="2.2" fill="#c9a284"></ellipse><rect x="41.5" y="35" width="7" height="34" rx="2" fill="#2a2d36"></rect><ellipse cx="45" cy="32" rx="2.8" ry="3.3" fill="#2a2420"></ellipse><ellipse cx="45" cy="33.2" rx="2.3" ry="2.2" fill="#c9a284"></ellipse><rect x="47.5" y="36" width="7" height="33" rx="2" fill="#3c4e80"></rect><ellipse cx="51" cy="33" rx="2.8" ry="3.3" fill="#2a2420"></ellipse><ellipse cx="51" cy="34.2" rx="2.3" ry="2.2" fill="#c9a284"></ellipse><rect x="53.5" y="34" width="7" height="35" rx="2" fill="#e8e8ec"></rect><ellipse cx="57" cy="31" rx="2.8" ry="3.3" fill="#2a2420"></ellipse><ellipse cx="57" cy="32.2" rx="2.3" ry="2.2" fill="#c9a284"></ellipse><rect x="60.5" y="39" width="7" height="30" rx="2" fill="#22252c"></rect><ellipse cx="64" cy="36" rx="2.8" ry="3.3" fill="#2a2420"></ellipse><ellipse cx="64" cy="37.2" rx="2.3" ry="2.2" fill="#c9a284"></ellipse><rect x="67.5" y="41" width="7" height="28" rx="2" fill="#dcdce2"></rect><ellipse cx="71" cy="38" rx="2.8" ry="3.3" fill="#2a2420"></ellipse><ellipse cx="71" cy="39.2" rx="2.3" ry="2.2" fill="#c9a284"></ellipse><rect x="4.5" y="41" width="7" height="28" rx="2" fill="#2a2c34"></rect><ellipse cx="8" cy="38" rx="2.8" ry="3.3" fill="#2a2420"></ellipse><ellipse cx="8" cy="39.2" rx="2.3" ry="2.2" fill="#c9a284"></ellipse><rect x="18.5" y="42" width="7" height="27" rx="2" fill="#f2f2f4"></rect><ellipse cx="22" cy="39" rx="2.8" ry="3.3" fill="#2a2420"></ellipse><ellipse cx="22" cy="40.2" rx="2.3" ry="2.2" fill="#c9a284"></ellipse><rect x="31.5" y="44" width="7" height="25" rx="2" fill="#303440"></rect><ellipse cx="35" cy="41" rx="2.8" ry="3.3" fill="#2a2420"></ellipse><ellipse cx="35" cy="42.2" rx="2.3" ry="2.2" fill="#c9a284"></ellipse><rect x="44.5" y="45" width="7" height="24" rx="2" fill="#e6e6ea"></rect><ellipse cx="48" cy="42" rx="2.8" ry="3.3" fill="#2a2420"></ellipse><ellipse cx="48" cy="43.2" rx="2.3" ry="2.2" fill="#c9a284"></ellipse><rect x="56.5" y="47" width="7" height="22" rx="2" fill="#2c3a66"></rect><ellipse cx="60" cy="44" rx="2.8" ry="3.3" fill="#2a2420"></ellipse><ellipse cx="60" cy="45.2" rx="2.3" ry="2.2" fill="#c9a284"></ellipse>
<rect x="79" y="48" width="22" height="48" rx="3" fill="#20232b"></rect><ellipse cx="88" cy="47" rx="5" ry="5.5" fill="#c9a284"></ellipse>
<rect x="101" y="56" width="29" height="50" fill="#3a3833"></rect><ellipse cx="114" cy="58" rx="5" ry="5" fill="#3a2a20"></ellipse><ellipse cx="114" cy="60" rx="3.5" ry="3.5" fill="#c8a080"></ellipse><rect x="106" y="65" width="17" height="14" rx="3" fill="#8e9288"></rect><rect x="117" y="72" width="13" height="30" fill="#1c1c1c"></rect>
<path d="M58 64c2-6 24-6 25 0l2 34H56z" fill="#b2b0a8"></path><ellipse cx="71" cy="56" rx="6" ry="7" fill="#221c18"></ellipse><ellipse cx="71" cy="58" rx="4" ry="5" fill="#d6b296"></ellipse><rect x="67" y="66" width="8" height="26" fill="#dad6cc"></rect>
<rect x="0" y="74" width="9" height="36" fill="#24272e"></rect>
<path d="M6 86c2-4 20-4 23 0v18H6z" fill="#a8c0e8"></path><ellipse cx="15" cy="78" rx="6" ry="7" fill="#bf9878"></ellipse><path d="M9 72c2-4 10-4 12 0v3H9z" fill="#222"></path>
<path d="M34 88c4-6 30-6 34 0l2 34H35z" fill="#8fb0e0"></path><ellipse cx="52" cy="80" rx="7" ry="8" fill="#c49a7c"></ellipse><path d="M45 74c2-5 12-5 14 0v3H45z" fill="#1a1a1a"></path><rect x="40" y="88" width="3" height="30" fill="#1e1e1e"></rect><rect x="61" y="88" width="3" height="22" fill="#1e1e1e"></rect>
<path d="M38 120h26l-3 48h-8l-2-30-3 32h-9z" fill="#18181c"></path><rect x="40" y="164" width="10" height="6" rx="2" fill="#111"></rect>
<rect x="68" y="96" width="12" height="30" fill="#4c4840"></rect>
<rect x="100" y="92" width="30" height="62" fill="#262624"></rect><path d="M101 98c4-4 18-4 23 2v16h-23z" fill="#4c5c40"></path>
<ellipse cx="90" cy="100" rx="12.5" ry="9.5" fill="#f6f6f4"></ellipse><path d="M78 102h23v5H78z" fill="#9a9a9a"></path><rect x="92" y="97" width="8" height="3" fill="#555"></rect>
<path d="M80 110c6-2 26-2 32 4l18 28v20H90c-6-14-10-30-10-52z" fill="#98c6ee"></path><ellipse cx="88" cy="112" rx="5" ry="5" fill="#cca48c"></ellipse>
<ellipse cx="14" cy="108" rx="14.5" ry="11" fill="#f6f6f4"></ellipse><path d="M0 110h31v6H0z" fill="#a8a8a8"></path>
<path d="M0 124c4-4 24-4 28 0l5 75H0z" fill="#a2cef2"></path><rect x="8" y="116" width="14" height="10" fill="#262626"></rect><rect x="23" y="130" width="8" height="69" fill="#1a2636"></rect>
<rect x="24" y="172" width="15" height="11" rx="3" fill="#8a8ee6"></rect>
<path d="M52 138c8-22 34-22 44-6 12 6 24 16 28 36l2 31H47c-5-20-1-42 5-61z" fill="#141418"></path>
<path d="M60 150c6-8 18-10 26-4" stroke="#3a3a40" stroke-width="2" fill="none"></path>
<rect x="113" y="148" width="17" height="51" rx="2" fill="#7a2824"></rect>
<rect x="45" y="193" width="22" height="6" fill="#e0c866"></rect>
</g></g></svg>
<div class="j" style="left:603px;top:688.7px;width:180.0px;font-size:12px;line-height:16px;color:#2a45c8;">車内で火災が発生した東海道新幹</div>
<div class="j" style="left:603px;top:705.4px;width:180.0px;font-size:12px;line-height:16px;color:#2a45c8;">線が小田原駅に到着。気分が悪い</div>
<div class="j" style="left:603px;top:722.0px;width:180.0px;font-size:12px;line-height:16px;color:#2a45c8;">という女性（手前）を誘導する消</div>
<div class="j" style="left:603px;top:738.7px;width:180.0px;font-size:12px;line-height:16px;color:#2a45c8;">防隊員ら＝３０日午後、神奈川県</div>
<div class="j" style="left:603px;top:755.3px;width:180.0px;font-size:12px;line-height:16px;color:#2a45c8;">小田原市（鴨川一也撮影）（写真</div>
<div class="j" style="left:603px;top:772.0px;width:72.0px;font-size:12px;line-height:16px;color:#2a45c8;">：産経新聞）</div>
<div class="j" style="left:813px;top:485.8px;width:368.0px;font-size:16px;line-height:20px;color:#2b2b2b;-webkit-text-stroke:0.25px #2b2b2b">　東海道新幹線下り「のぞみ２２５号」（東京発新</div>
<div class="j" style="left:813px;top:514.6px;width:368.0px;font-size:16px;line-height:20px;color:#2b2b2b;-webkit-text-stroke:0.25px #2b2b2b">大阪行き）の車両内で３０日昼に発生した火災で、</div>
<div class="j" style="left:813px;top:543.4px;width:368.0px;font-size:16px;line-height:20px;color:#2b2b2b;-webkit-text-stroke:0.25px #2b2b2b">神奈川県警は現住建造物等放火の容疑で捜査を始め</div>
<div class="j" style="left:813px;top:572.2px;width:368.0px;font-size:16px;line-height:20px;color:#2b2b2b;-webkit-text-stroke:0.25px #2b2b2b">たことを明らかにした。捜査関係者によると、火災</div>
<div class="j" style="left:813px;top:601.0px;width:352.0px;font-size:16px;line-height:20px;color:#2b2b2b;-webkit-text-stroke:0.25px #2b2b2b">で死亡した男は、所持品などから東京都杉並区の</div>
<div class="j" style="left:813px;top:629.8px;width:320.0px;font-size:16px;line-height:20px;color:#2b2b2b;-webkit-text-stroke:0.25px #2b2b2b">７１歳の可能性があり、確認を進めている。</div>
<div class="j" style="left:813px;top:687.4px;width:368.0px;font-size:16px;line-height:20px;color:#2b2b2b;-webkit-text-stroke:0.25px #2b2b2b">　県警によると、乗客のひとりは「男の人が自分の</div>
<div class="j" style="left:813px;top:716.2px;width:368.0px;font-size:16px;line-height:20px;color:#2b2b2b;-webkit-text-stroke:0.25px #2b2b2b">ところに来て『お金をあげる』と千円札数枚を差し</div>
<div class="j" style="left:813px;top:745.0px;width:384.0px;font-size:16px;line-height:20px;color:#2b2b2b;-webkit-text-stroke:0.25px #2b2b2b">出して、目の前のテーブルの上に置いた」などと話し</div>
<div class="j" style="left:813px;top:773.8px;width:368.0px;font-size:16px;line-height:20px;color:#2b2b2b;-webkit-text-stroke:0.25px #2b2b2b">ている。男に「拾ったからあげる」といわれた乗客</div>
<div class="j" style="left:813px;top:802.6px;width:368.0px;font-size:16px;line-height:20px;color:#2b2b2b;-webkit-text-stroke:0.25px #2b2b2b">が「いらない」と答えると、男は通路をうろうろし</div>
<div class="j" style="left:593px;top:831.4px;width:576.0px;font-size:16px;line-height:20px;color:#2b2b2b;-webkit-text-stroke:0.25px #2b2b2b">た後、目の前で液体を体にかけたという。この乗客は、男に「あなたも逃げなさ</div>
<div class="j" style="left:593px;top:860.2px;width:384.0px;font-size:16px;line-height:20px;color:#2b2b2b;-webkit-text-stroke:0.25px #2b2b2b">い」と言われ、車両の後ろの方へ逃げ、無事だった。</div>
<div class="j" style="left:593px;top:917.8px;width:592.0px;font-size:16px;line-height:20px;color:#2b2b2b;-webkit-text-stroke:0.25px #2b2b2b">　この火災では、油のようなものをかぶった男と、１、２号車の間で倒れていた女</div>
<div class="j" style="left:593px;top:946.6px;width:208.0px;font-size:16px;line-height:20px;color:#2b2b2b;-webkit-text-stroke:0.25px #2b2b2b">性の死亡が確認されている。</div>
<div class="j" style="left:593px;top:1004.2px;width:96.0px;font-size:16px;line-height:20px;color:#2b2b2b;-webkit-text-stroke:0.25px #2b2b2b">【関連記事】</div>
<div class="j" style="left:593px;top:1027.0px;width:480.0px;font-size:15px;line-height:20px;color:#1a3bd6;">東海道新幹線火災　安全神話に激震…「死ぬかと思った」車内パニック</div>
<div class="j" style="left:593px;top:1051.2px;width:600.0px;font-size:15px;line-height:20px;color:#1a3bd6;">東海道新幹線火災　ネット上に投稿相次ぐ「おじさんがガソリン」「新幹線が燃えてる」</div>
<div class="j" style="left:593px;top:1075.5px;width:465.0px;font-size:15px;line-height:20px;color:#1a3bd6;">クマのぬいぐるみ抱き、電車に飛び込んだ母娘…いまだ身元不明の謎</div>
<div class="j" style="left:593px;top:1099.8px;width:345.0px;font-size:15px;line-height:20px;color:#1a3bd6;">流線形がアダ…新幹線よじ登り感電自殺「想定外」</div>
<div class="j" style="left:593px;top:1124.0px;width:420.0px;font-size:15px;line-height:20px;color:#1a3bd6;">ネット騒然「電車の人身事故で人が消えた」　その真相とは…</div>
<div class="j" style="left:593px;top:1163.0px;width:187.0px;font-size:13.5px;line-height:16px;color:#666;">最終更新:6月30日(火)17時37分</div>
<div class="a" style="left:1025px;top:1166px;width:34px;height:30px;background:#1a5a8a"></div>
<div class="j" style="left: 1043px; top: 1167px; font-size: 13px; line-height: 14px; color: rgb(255, 255, 255); width: 13px;">産</div>
<div class="j" style="left: 1043px; top: 1181px; font-size: 13px; line-height: 14px; color: rgb(255, 255, 255); width: 13px;">經</div>
<div class="j" style="left: 1027px; top: 1167px; font-size: 13px; line-height: 14px; color: rgb(255, 255, 255); width: 13px;">新</div>
<div class="j" style="left: 1027px; top: 1181px; font-size: 13px; line-height: 14px; color: rgb(255, 255, 255); width: 13px;">聞</div>
<div class="j" style="left:1061px;top:1164px;width:134px;font-size:33px;line-height:36px;font-weight:bold;color:#000;letter-spacing:-1px;-webkit-text-stroke-width:0.8px">産經新聞</div>
<svg class="a" style="left:1227px;top:352px" width="300" height="250" viewBox="1227 352 300 250"><defs>
<radialGradient id="mw" cx="0.5" cy="0.5" r="0.5"><stop offset="0" stop-color="#468a92" stop-opacity="0.9"></stop><stop offset="0.5" stop-color="#2a5a68" stop-opacity="0.65"></stop><stop offset="1" stop-color="#0c1a28" stop-opacity="0"></stop></radialGradient>
<radialGradient id="bg" cx="0.45" cy="0.5" r="0.75"><stop offset="0" stop-color="#14304a"></stop><stop offset="1" stop-color="#060c16"></stop></radialGradient>
<filter id="neb" x="0" y="0" width="100%" height="100%"><feTurbulence type="fractalNoise" baseFrequency="0.045" numOctaves="3" seed="4"></feTurbulence><feColorMatrix values="0 0 0 0 0.30  0 0 0 0 0.62  0 0 0 0 0.66  0 0 0 2.0 -0.78"></feColorMatrix></filter>
<mask id="bm"><ellipse cx="1380" cy="480" rx="200" ry="70" transform="rotate(42 1380 480)" fill="url(#mwm)"></ellipse></mask>
<radialGradient id="mwm" cx="0.5" cy="0.5" r="0.5"><stop offset="0" stop-color="#fff"></stop><stop offset="1" stop-color="#000"></stop></radialGradient>
</defs>
<rect x="1227" y="352" width="300" height="250" fill="url(#bg)"></rect>
<ellipse cx="1380" cy="480" rx="200" ry="64" transform="rotate(42 1380 480)" fill="url(#mw)"></ellipse>
<rect x="1227" y="352" width="300" height="250" filter="url(#neb)" mask="url(#bm)" opacity="0.9"></rect>
<g transform="translate(1227 352)"><circle cx="135.7" cy="139.9" r="0.7" fill="#9fc4ff" opacity="0.58"></circle><circle cx="256.5" cy="47.5" r="0.7" fill="#9fc4ff" opacity="0.61"></circle><circle cx="237.9" cy="23.5" r="0.5" fill="#9fc4ff" opacity="0.35"></circle><circle cx="242.9" cy="173.4" r="0.4" fill="#fff0d8" opacity="0.67"></circle><circle cx="289.4" cy="163.5" r="0.55" fill="#9fc4ff" opacity="0.71"></circle><circle cx="4.5" cy="132.1" r="0.4" fill="#dbe8ff" opacity="0.27"></circle><circle cx="179.9" cy="194.5" r="0.5" fill="#dbe8ff" opacity="0.56"></circle><circle cx="155.7" cy="160.1" r="0.5" fill="#ffffff" opacity="0.25"></circle><circle cx="137.2" cy="69.5" r="0.55" fill="#ffffff" opacity="0.95"></circle><circle cx="212.3" cy="78.8" r="0.45" fill="#ffffff" opacity="0.61"></circle><circle cx="21.1" cy="191.6" r="0.5" fill="#b8d4ff" opacity="0.33"></circle><circle cx="116.0" cy="239.5" r="0.7" fill="#dbe8ff" opacity="0.73"></circle><circle cx="62.9" cy="227.6" r="0.5" fill="#fff0d8" opacity="0.51"></circle><circle cx="125.9" cy="141.6" r="0.45" fill="#b8d4ff" opacity="0.79"></circle><circle cx="101.1" cy="77.8" r="0.4" fill="#ffffff" opacity="0.92"></circle><circle cx="40.4" cy="176.8" r="0.4" fill="#fff0d8" opacity="0.29"></circle><circle cx="53.3" cy="139.8" r="0.5" fill="#dbe8ff" opacity="0.61"></circle><circle cx="125.8" cy="95.9" r="0.5" fill="#dbe8ff" opacity="0.54"></circle><circle cx="0.1" cy="216.1" r="0.7" fill="#ffffff" opacity="0.66"></circle><circle cx="63.2" cy="98.6" r="0.7" fill="#9fc4ff" opacity="0.67"></circle><circle cx="30.1" cy="247.3" r="0.45" fill="#ffffff" opacity="0.56"></circle><circle cx="231.8" cy="82.2" r="0.5" fill="#ffffff" opacity="0.52"></circle><circle cx="27.0" cy="145.7" r="0.45" fill="#b8d4ff" opacity="0.26"></circle><circle cx="111.5" cy="113.3" r="0.55" fill="#9fc4ff" opacity="0.59"></circle><circle cx="40.7" cy="96.5" r="0.6" fill="#dbe8ff" opacity="0.36"></circle><circle cx="245.3" cy="62.4" r="0.45" fill="#9fc4ff" opacity="0.36"></circle><circle cx="59.0" cy="237.5" r="0.5" fill="#fff0d8" opacity="0.67"></circle><circle cx="14.2" cy="27.3" r="0.55" fill="#dbe8ff" opacity="0.92"></circle><circle cx="221.9" cy="97.9" r="0.5" fill="#9fc4ff" opacity="0.83"></circle><circle cx="147.3" cy="130.0" r="0.6" fill="#dbe8ff" opacity="0.93"></circle><circle cx="68.5" cy="139.8" r="0.7" fill="#ffffff" opacity="0.68"></circle><circle cx="84.1" cy="229.3" r="0.45" fill="#ffffff" opacity="0.77"></circle><circle cx="80.8" cy="111.4" r="0.4" fill="#b8d4ff" opacity="0.28"></circle><circle cx="110.6" cy="143.0" r="0.45" fill="#dbe8ff" opacity="0.31"></circle><circle cx="267.3" cy="245.1" r="0.6" fill="#9fc4ff" opacity="0.76"></circle><circle cx="175.3" cy="35.1" r="0.4" fill="#fff0d8" opacity="0.90"></circle><circle cx="273.1" cy="175.2" r="0.4" fill="#ffffff" opacity="0.26"></circle><circle cx="144.7" cy="182.6" r="0.5" fill="#ffffff" opacity="0.35"></circle><circle cx="22.6" cy="136.5" r="0.6" fill="#dbe8ff" opacity="0.28"></circle><circle cx="238.0" cy="228.8" r="0.5" fill="#fff0d8" opacity="0.31"></circle><circle cx="270.3" cy="217.8" r="0.5" fill="#ffffff" opacity="0.91"></circle><circle cx="259.0" cy="143.2" r="0.55" fill="#fff0d8" opacity="0.71"></circle><circle cx="174.8" cy="152.2" r="0.4" fill="#ffffff" opacity="0.31"></circle><circle cx="298.0" cy="219.9" r="0.6" fill="#9fc4ff" opacity="0.48"></circle><circle cx="137.3" cy="115.7" r="0.55" fill="#9fc4ff" opacity="0.31"></circle><circle cx="8.9" cy="150.3" r="0.5" fill="#ffffff" opacity="0.27"></circle><circle cx="149.2" cy="153.6" r="0.5" fill="#ffffff" opacity="0.43"></circle><circle cx="110.4" cy="35.8" r="0.55" fill="#dbe8ff" opacity="0.39"></circle><circle cx="226.1" cy="85.6" r="0.5" fill="#dbe8ff" opacity="0.60"></circle><circle cx="98.1" cy="166.5" r="0.45" fill="#dbe8ff" opacity="0.69"></circle><circle cx="264.1" cy="96.1" r="0.55" fill="#dbe8ff" opacity="0.89"></circle><circle cx="40.9" cy="124.1" r="0.7" fill="#ffffff" opacity="0.88"></circle><circle cx="213.4" cy="237.5" r="0.5" fill="#ffffff" opacity="0.83"></circle><circle cx="135.2" cy="68.8" r="0.45" fill="#fff0d8" opacity="0.83"></circle><circle cx="187.7" cy="123.5" r="0.5" fill="#9fc4ff" opacity="0.75"></circle><circle cx="135.7" cy="18.7" r="0.4" fill="#9fc4ff" opacity="0.44"></circle><circle cx="12.4" cy="177.2" r="0.55" fill="#9fc4ff" opacity="0.50"></circle><circle cx="5.7" cy="34.0" r="0.5" fill="#b8d4ff" opacity="0.38"></circle><circle cx="71.2" cy="35.2" r="0.4" fill="#ffffff" opacity="0.94"></circle><circle cx="133.9" cy="157.5" r="0.6" fill="#b8d4ff" opacity="0.70"></circle><circle cx="287.5" cy="171.1" r="0.45" fill="#b8d4ff" opacity="0.83"></circle><circle cx="53.6" cy="2.7" r="0.5" fill="#ffffff" opacity="0.62"></circle><circle cx="53.7" cy="68.1" r="0.5" fill="#9fc4ff" opacity="0.63"></circle><circle cx="150.1" cy="249.2" r="0.45" fill="#dbe8ff" opacity="0.53"></circle><circle cx="26.2" cy="233.2" r="0.6" fill="#fff0d8" opacity="0.52"></circle><circle cx="136.1" cy="156.4" r="0.4" fill="#9fc4ff" opacity="0.51"></circle><circle cx="195.8" cy="125.7" r="0.7" fill="#fff0d8" opacity="0.91"></circle><circle cx="97.9" cy="245.6" r="0.4" fill="#ffffff" opacity="0.76"></circle><circle cx="64.0" cy="225.0" r="0.4" fill="#9fc4ff" opacity="0.93"></circle><circle cx="293.0" cy="233.1" r="0.5" fill="#ffffff" opacity="0.89"></circle><circle cx="104.6" cy="20.7" r="0.5" fill="#fff0d8" opacity="0.49"></circle><circle cx="230.5" cy="121.9" r="0.4" fill="#ffffff" opacity="0.40"></circle><circle cx="128.7" cy="8.8" r="0.55" fill="#dbe8ff" opacity="0.48"></circle><circle cx="141.2" cy="250.0" r="0.6" fill="#fff0d8" opacity="0.61"></circle><circle cx="283.7" cy="123.1" r="0.6" fill="#dbe8ff" opacity="0.31"></circle><circle cx="131.8" cy="139.7" r="0.7" fill="#dbe8ff" opacity="0.76"></circle><circle cx="156.8" cy="210.9" r="0.55" fill="#fff0d8" opacity="0.43"></circle><circle cx="286.4" cy="217.5" r="0.55" fill="#dbe8ff" opacity="0.40"></circle><circle cx="290.5" cy="131.1" r="0.55" fill="#fff0d8" opacity="0.60"></circle><circle cx="160.8" cy="125.8" r="0.55" fill="#9fc4ff" opacity="0.51"></circle><circle cx="290.8" cy="129.0" r="0.5" fill="#9fc4ff" opacity="0.63"></circle><circle cx="36.6" cy="23.3" r="0.45" fill="#9fc4ff" opacity="0.30"></circle><circle cx="137.7" cy="230.2" r="0.7" fill="#b8d4ff" opacity="0.90"></circle><circle cx="73.9" cy="123.3" r="0.5" fill="#fff0d8" opacity="0.55"></circle><circle cx="157.5" cy="27.2" r="0.5" fill="#b8d4ff" opacity="0.68"></circle><circle cx="38.8" cy="194.8" r="0.4" fill="#dbe8ff" opacity="0.27"></circle><circle cx="68.2" cy="171.8" r="0.5" fill="#dbe8ff" opacity="0.76"></circle><circle cx="185.9" cy="26.2" r="0.6" fill="#9fc4ff" opacity="0.66"></circle><circle cx="187.1" cy="179.4" r="0.6" fill="#fff0d8" opacity="0.62"></circle><circle cx="7.0" cy="158.3" r="0.7" fill="#dbe8ff" opacity="0.62"></circle><circle cx="161.5" cy="216.0" r="0.55" fill="#9fc4ff" opacity="0.70"></circle><circle cx="64.9" cy="135.7" r="0.55" fill="#dbe8ff" opacity="0.85"></circle><circle cx="274.4" cy="157.0" r="0.5" fill="#b8d4ff" opacity="0.88"></circle><circle cx="180.9" cy="222.7" r="0.45" fill="#dbe8ff" opacity="0.40"></circle><circle cx="266.3" cy="33.5" r="0.45" fill="#ffffff" opacity="0.34"></circle><circle cx="77.8" cy="24.3" r="0.7" fill="#9fc4ff" opacity="0.91"></circle><circle cx="237.0" cy="31.5" r="0.5" fill="#ffffff" opacity="0.69"></circle><circle cx="28.8" cy="142.5" r="0.5" fill="#b8d4ff" opacity="0.89"></circle><circle cx="34.6" cy="126.4" r="0.7" fill="#dbe8ff" opacity="0.49"></circle><circle cx="240.9" cy="120.5" r="0.4" fill="#9fc4ff" opacity="0.28"></circle><circle cx="184.0" cy="226.3" r="0.5" fill="#dbe8ff" opacity="0.35"></circle><circle cx="34.5" cy="43.1" r="0.45" fill="#ffffff" opacity="0.94"></circle><circle cx="173.9" cy="33.6" r="0.6" fill="#ffffff" opacity="0.57"></circle><circle cx="98.0" cy="116.7" r="0.55" fill="#dbe8ff" opacity="0.50"></circle><circle cx="180.3" cy="3.3" r="0.6" fill="#dbe8ff" opacity="0.28"></circle><circle cx="54.4" cy="113.5" r="0.6" fill="#dbe8ff" opacity="0.51"></circle><circle cx="181.5" cy="23.7" r="0.7" fill="#ffffff" opacity="0.26"></circle><circle cx="240.5" cy="176.2" r="0.7" fill="#fff0d8" opacity="0.89"></circle><circle cx="170.9" cy="47.7" r="0.55" fill="#b8d4ff" opacity="0.94"></circle><circle cx="83.9" cy="29.1" r="0.6" fill="#fff0d8" opacity="0.79"></circle><circle cx="40.0" cy="82.5" r="0.55" fill="#fff0d8" opacity="0.74"></circle><circle cx="229.6" cy="101.4" r="0.6" fill="#b8d4ff" opacity="0.38"></circle><circle cx="90.5" cy="25.2" r="0.5" fill="#9fc4ff" opacity="0.94"></circle><circle cx="14.9" cy="68.2" r="0.6" fill="#dbe8ff" opacity="0.46"></circle><circle cx="197.9" cy="142.4" r="0.55" fill="#9fc4ff" opacity="0.30"></circle><circle cx="300.0" cy="160.6" r="0.6" fill="#fff0d8" opacity="0.33"></circle><circle cx="294.0" cy="5.7" r="0.55" fill="#dbe8ff" opacity="0.33"></circle><circle cx="77.0" cy="100.4" r="0.4" fill="#fff0d8" opacity="0.78"></circle><circle cx="3.2" cy="64.6" r="0.5" fill="#9fc4ff" opacity="0.88"></circle><circle cx="162.1" cy="103.9" r="0.55" fill="#ffffff" opacity="0.65"></circle><circle cx="191.4" cy="202.4" r="0.4" fill="#ffffff" opacity="0.63"></circle><circle cx="115.9" cy="234.7" r="0.5" fill="#dbe8ff" opacity="0.58"></circle><circle cx="256.7" cy="135.5" r="0.55" fill="#fff0d8" opacity="0.29"></circle><circle cx="126.2" cy="131.7" r="0.55" fill="#9fc4ff" opacity="0.47"></circle><circle cx="85.7" cy="163.8" r="0.55" fill="#b8d4ff" opacity="0.90"></circle><circle cx="8.1" cy="193.1" r="0.55" fill="#dbe8ff" opacity="0.28"></circle><circle cx="122.6" cy="171.1" r="0.4" fill="#fff0d8" opacity="0.88"></circle><circle cx="15.0" cy="247.2" r="0.5" fill="#dbe8ff" opacity="0.30"></circle><circle cx="128.9" cy="119.4" r="0.7" fill="#9fc4ff" opacity="0.42"></circle><circle cx="29.5" cy="202.5" r="0.5" fill="#dbe8ff" opacity="0.35"></circle><circle cx="181.1" cy="28.8" r="0.55" fill="#ffffff" opacity="0.54"></circle><circle cx="61.1" cy="13.0" r="0.55" fill="#b8d4ff" opacity="0.36"></circle><circle cx="132.9" cy="167.0" r="0.5" fill="#9fc4ff" opacity="0.67"></circle><circle cx="204.6" cy="91.0" r="0.6" fill="#dbe8ff" opacity="0.62"></circle><circle cx="285.8" cy="183.6" r="0.45" fill="#9fc4ff" opacity="0.59"></circle><circle cx="267.8" cy="196.1" r="0.55" fill="#b8d4ff" opacity="0.84"></circle><circle cx="81.5" cy="171.3" r="0.55" fill="#dbe8ff" opacity="0.74"></circle><circle cx="189.9" cy="188.3" r="0.45" fill="#9fc4ff" opacity="0.92"></circle><circle cx="293.9" cy="228.9" r="0.6" fill="#ffffff" opacity="0.28"></circle><circle cx="2.8" cy="64.9" r="0.4" fill="#ffffff" opacity="0.69"></circle><circle cx="66.8" cy="69.6" r="0.7" fill="#dbe8ff" opacity="0.31"></circle><circle cx="165.2" cy="157.8" r="0.5" fill="#b8d4ff" opacity="0.59"></circle><circle cx="63.2" cy="85.9" r="0.6" fill="#ffffff" opacity="0.34"></circle><circle cx="240.7" cy="111.8" r="0.7" fill="#dbe8ff" opacity="0.69"></circle><circle cx="133.3" cy="186.8" r="0.5" fill="#b8d4ff" opacity="0.82"></circle><circle cx="46.0" cy="209.1" r="0.55" fill="#9fc4ff" opacity="0.48"></circle><circle cx="227.7" cy="206.5" r="0.45" fill="#b8d4ff" opacity="0.55"></circle><circle cx="174.2" cy="115.5" r="0.5" fill="#ffffff" opacity="0.30"></circle><circle cx="129.6" cy="142.0" r="0.7" fill="#b8d4ff" opacity="0.73"></circle><circle cx="247.0" cy="2.3" r="0.5" fill="#9fc4ff" opacity="0.40"></circle><circle cx="24.5" cy="76.0" r="0.6" fill="#b8d4ff" opacity="0.78"></circle><circle cx="84.9" cy="35.7" r="0.5" fill="#b8d4ff" opacity="0.71"></circle><circle cx="109.9" cy="29.3" r="0.6" fill="#9fc4ff" opacity="0.56"></circle><circle cx="275.6" cy="235.0" r="0.5" fill="#b8d4ff" opacity="0.56"></circle><circle cx="137.5" cy="55.3" r="0.6" fill="#dbe8ff" opacity="0.88"></circle><circle cx="25.3" cy="207.1" r="0.4" fill="#fff0d8" opacity="0.50"></circle><circle cx="175.4" cy="199.0" r="0.6" fill="#fff0d8" opacity="0.64"></circle><circle cx="162.2" cy="209.1" r="0.55" fill="#ffffff" opacity="0.37"></circle><circle cx="227.7" cy="220.2" r="0.5" fill="#dbe8ff" opacity="0.82"></circle><circle cx="154.7" cy="136.0" r="0.55" fill="#ffffff" opacity="0.46"></circle><circle cx="195.4" cy="201.1" r="0.4" fill="#b8d4ff" opacity="0.66"></circle><circle cx="236.4" cy="21.0" r="0.4" fill="#ffffff" opacity="0.44"></circle><circle cx="269.7" cy="21.2" r="0.6" fill="#ffffff" opacity="0.71"></circle><circle cx="223.7" cy="162.3" r="0.45" fill="#fff0d8" opacity="0.75"></circle><circle cx="229.6" cy="130.4" r="0.7" fill="#b8d4ff" opacity="0.57"></circle><circle cx="101.3" cy="242.1" r="0.6" fill="#fff0d8" opacity="0.35"></circle><circle cx="161.2" cy="180.2" r="0.6" fill="#ffffff" opacity="0.68"></circle><circle cx="123.2" cy="206.6" r="0.6" fill="#ffffff" opacity="0.49"></circle><circle cx="241.8" cy="208.5" r="0.5" fill="#ffffff" opacity="0.92"></circle><circle cx="157.2" cy="177.5" r="0.7" fill="#fff0d8" opacity="0.33"></circle><circle cx="274.7" cy="61.4" r="0.45" fill="#fff0d8" opacity="0.94"></circle><circle cx="205.2" cy="80.2" r="0.5" fill="#b8d4ff" opacity="0.55"></circle><circle cx="82.2" cy="221.5" r="0.5" fill="#ffffff" opacity="0.47"></circle><circle cx="91.0" cy="38.9" r="0.45" fill="#fff0d8" opacity="0.89"></circle><circle cx="5.2" cy="120.3" r="0.7" fill="#ffffff" opacity="0.28"></circle><circle cx="59.3" cy="89.8" r="0.55" fill="#fff0d8" opacity="0.41"></circle><circle cx="178.4" cy="56.0" r="0.45" fill="#fff0d8" opacity="0.88"></circle><circle cx="51.8" cy="189.4" r="0.5" fill="#9fc4ff" opacity="0.69"></circle><circle cx="143.8" cy="65.1" r="0.5" fill="#b8d4ff" opacity="0.89"></circle><circle cx="198.1" cy="192.9" r="0.4" fill="#dbe8ff" opacity="0.59"></circle><circle cx="119.8" cy="54.4" r="0.45" fill="#fff0d8" opacity="0.81"></circle><circle cx="292.8" cy="198.7" r="0.7" fill="#ffffff" opacity="0.44"></circle><circle cx="197.3" cy="59.4" r="0.4" fill="#b8d4ff" opacity="0.86"></circle><circle cx="135.0" cy="61.6" r="0.5" fill="#dbe8ff" opacity="0.67"></circle><circle cx="124.7" cy="193.0" r="0.45" fill="#9fc4ff" opacity="0.43"></circle><circle cx="39.3" cy="185.4" r="0.55" fill="#9fc4ff" opacity="0.44"></circle><circle cx="15.9" cy="143.0" r="0.45" fill="#dbe8ff" opacity="0.25"></circle><circle cx="246.6" cy="20.6" r="0.5" fill="#9fc4ff" opacity="0.68"></circle><circle cx="29.2" cy="120.0" r="0.5" fill="#9fc4ff" opacity="0.31"></circle><circle cx="163.0" cy="126.5" r="0.4" fill="#fff0d8" opacity="0.80"></circle><circle cx="57.9" cy="170.6" r="0.7" fill="#dbe8ff" opacity="0.83"></circle><circle cx="11.2" cy="103.3" r="0.5" fill="#b8d4ff" opacity="0.36"></circle><circle cx="94.8" cy="101.4" r="0.55" fill="#fff0d8" opacity="0.46"></circle><circle cx="200.1" cy="16.8" r="0.4" fill="#ffffff" opacity="0.73"></circle><circle cx="200.3" cy="169.0" r="0.6" fill="#ffffff" opacity="0.93"></circle><circle cx="196.2" cy="3.1" r="0.5" fill="#fff0d8" opacity="0.75"></circle><circle cx="71.2" cy="141.0" r="0.5" fill="#dbe8ff" opacity="0.79"></circle><circle cx="270.5" cy="38.0" r="0.6" fill="#9fc4ff" opacity="0.51"></circle><circle cx="224.9" cy="238.5" r="0.7" fill="#ffffff" opacity="0.52"></circle><circle cx="76.9" cy="50.0" r="0.6" fill="#b8d4ff" opacity="0.33"></circle><circle cx="283.5" cy="140.7" r="0.6" fill="#fff0d8" opacity="0.70"></circle><circle cx="248.1" cy="23.1" r="0.45" fill="#dbe8ff" opacity="0.69"></circle><circle cx="203.3" cy="177.1" r="0.45" fill="#ffffff" opacity="0.39"></circle><circle cx="251.1" cy="148.2" r="0.4" fill="#ffffff" opacity="0.32"></circle><circle cx="47.1" cy="31.0" r="0.5" fill="#b8d4ff" opacity="0.79"></circle><circle cx="276.2" cy="106.8" r="0.55" fill="#dbe8ff" opacity="0.35"></circle><circle cx="230.1" cy="205.3" r="0.5" fill="#fff0d8" opacity="0.59"></circle><circle cx="186.9" cy="181.7" r="0.55" fill="#dbe8ff" opacity="0.74"></circle><circle cx="198.1" cy="152.2" r="0.4" fill="#dbe8ff" opacity="0.43"></circle><circle cx="102.7" cy="162.7" r="0.4" fill="#dbe8ff" opacity="0.64"></circle><circle cx="152.8" cy="197.1" r="0.7" fill="#dbe8ff" opacity="0.32"></circle><circle cx="76.2" cy="134.7" r="0.5" fill="#b8d4ff" opacity="0.63"></circle><circle cx="183.6" cy="128.4" r="0.55" fill="#9fc4ff" opacity="0.75"></circle><circle cx="299.5" cy="176.7" r="0.45" fill="#ffffff" opacity="0.65"></circle><circle cx="188.1" cy="49.5" r="0.4" fill="#fff0d8" opacity="0.35"></circle><circle cx="172.9" cy="174.3" r="0.5" fill="#b8d4ff" opacity="0.31"></circle><circle cx="79.9" cy="220.7" r="0.5" fill="#dbe8ff" opacity="0.93"></circle><circle cx="71.6" cy="142.3" r="0.55" fill="#9fc4ff" opacity="0.64"></circle><circle cx="274.5" cy="42.1" r="0.6" fill="#b8d4ff" opacity="0.94"></circle><circle cx="180.5" cy="30.7" r="0.7" fill="#b8d4ff" opacity="0.25"></circle><circle cx="72.3" cy="143.4" r="0.7" fill="#9fc4ff" opacity="0.37"></circle><circle cx="164.4" cy="19.1" r="0.4" fill="#dbe8ff" opacity="0.53"></circle><circle cx="92.3" cy="167.8" r="0.6" fill="#9fc4ff" opacity="0.88"></circle><circle cx="177.6" cy="201.0" r="0.4" fill="#fff0d8" opacity="0.36"></circle><circle cx="140.4" cy="35.7" r="0.5" fill="#fff0d8" opacity="0.33"></circle><circle cx="52.1" cy="129.9" r="0.5" fill="#b8d4ff" opacity="0.42"></circle><circle cx="16.0" cy="196.0" r="0.6" fill="#dbe8ff" opacity="0.72"></circle><circle cx="121.0" cy="124.4" r="0.4" fill="#fff0d8" opacity="0.58"></circle><circle cx="269.0" cy="228.3" r="0.55" fill="#b8d4ff" opacity="0.78"></circle><circle cx="145.7" cy="248.7" r="0.7" fill="#fff0d8" opacity="0.88"></circle><circle cx="247.5" cy="29.3" r="0.4" fill="#9fc4ff" opacity="0.88"></circle><circle cx="99.1" cy="130.2" r="0.5" fill="#b8d4ff" opacity="0.88"></circle><circle cx="272.2" cy="74.0" r="0.55" fill="#fff0d8" opacity="0.88"></circle><circle cx="179.3" cy="188.0" r="0.5" fill="#ffffff" opacity="0.87"></circle><circle cx="73.3" cy="211.1" r="0.45" fill="#fff0d8" opacity="0.60"></circle><circle cx="291.8" cy="118.9" r="0.4" fill="#dbe8ff" opacity="0.62"></circle><circle cx="163.5" cy="164.2" r="0.45" fill="#b8d4ff" opacity="0.87"></circle><circle cx="259.9" cy="105.4" r="0.7" fill="#fff0d8" opacity="0.36"></circle><circle cx="170.0" cy="225.9" r="0.4" fill="#dbe8ff" opacity="0.61"></circle><circle cx="37.1" cy="134.4" r="0.5" fill="#dbe8ff" opacity="0.25"></circle><circle cx="218.5" cy="6.0" r="0.45" fill="#fff0d8" opacity="0.29"></circle><circle cx="244.6" cy="99.3" r="0.5" fill="#dbe8ff" opacity="0.73"></circle><circle cx="13.8" cy="7.8" r="0.5" fill="#fff0d8" opacity="0.47"></circle><circle cx="43.0" cy="194.2" r="0.7" fill="#dbe8ff" opacity="0.58"></circle><circle cx="60.8" cy="214.8" r="0.6" fill="#dbe8ff" opacity="0.88"></circle><circle cx="94.8" cy="214.8" r="0.5" fill="#9fc4ff" opacity="0.26"></circle><circle cx="60.6" cy="158.1" r="0.45" fill="#ffffff" opacity="0.91"></circle><circle cx="195.0" cy="76.5" r="0.7" fill="#b8d4ff" opacity="0.47"></circle><circle cx="260.9" cy="178.3" r="0.45" fill="#fff0d8" opacity="0.48"></circle><circle cx="124.6" cy="42.3" r="0.7" fill="#dbe8ff" opacity="0.47"></circle><circle cx="80.7" cy="180.0" r="0.55" fill="#b8d4ff" opacity="0.72"></circle><circle cx="111.8" cy="165.5" r="0.4" fill="#dbe8ff" opacity="0.66"></circle><circle cx="293.1" cy="223.9" r="0.45" fill="#b8d4ff" opacity="0.72"></circle><circle cx="39.8" cy="167.0" r="0.5" fill="#fff0d8" opacity="0.94"></circle><circle cx="275.1" cy="18.5" r="0.4" fill="#9fc4ff" opacity="0.25"></circle><circle cx="85.4" cy="62.7" r="0.7" fill="#dbe8ff" opacity="0.65"></circle><circle cx="85.5" cy="188.9" r="0.45" fill="#9fc4ff" opacity="0.38"></circle><circle cx="8.6" cy="197.6" r="0.45" fill="#ffffff" opacity="0.94"></circle><circle cx="186.6" cy="229.1" r="0.55" fill="#fff0d8" opacity="0.52"></circle><circle cx="18.1" cy="16.0" r="0.7" fill="#b8d4ff" opacity="0.70"></circle><circle cx="96.2" cy="120.9" r="0.4" fill="#9fc4ff" opacity="0.61"></circle><circle cx="248.1" cy="158.7" r="0.55" fill="#9fc4ff" opacity="0.77"></circle><circle cx="52.2" cy="194.9" r="0.45" fill="#fff0d8" opacity="0.33"></circle><circle cx="70.6" cy="110.1" r="0.7" fill="#dbe8ff" opacity="0.43"></circle><circle cx="77.9" cy="136.0" r="0.7" fill="#fff0d8" opacity="0.66"></circle><circle cx="78.4" cy="50.6" r="0.6" fill="#fff0d8" opacity="0.29"></circle><circle cx="261.9" cy="45.0" r="0.45" fill="#9fc4ff" opacity="0.68"></circle><circle cx="148.8" cy="108.7" r="0.5" fill="#ffffff" opacity="0.76"></circle><circle cx="21.8" cy="226.8" r="0.55" fill="#9fc4ff" opacity="0.70"></circle><circle cx="237.5" cy="59.5" r="0.45" fill="#fff0d8" opacity="0.29"></circle><circle cx="12.7" cy="78.6" r="0.55" fill="#b8d4ff" opacity="0.77"></circle><circle cx="229.6" cy="124.6" r="0.6" fill="#dbe8ff" opacity="0.82"></circle><circle cx="113.7" cy="62.0" r="0.5" fill="#9fc4ff" opacity="0.73"></circle><circle cx="236.0" cy="15.3" r="0.5" fill="#dbe8ff" opacity="0.58"></circle><circle cx="211.1" cy="239.3" r="0.45" fill="#9fc4ff" opacity="0.59"></circle><circle cx="295.9" cy="36.1" r="0.5" fill="#ffffff" opacity="0.62"></circle><circle cx="1.0" cy="102.5" r="0.55" fill="#fff0d8" opacity="0.35"></circle><circle cx="166.8" cy="118.0" r="0.4" fill="#9fc4ff" opacity="0.93"></circle><circle cx="69.0" cy="63.3" r="0.55" fill="#fff0d8" opacity="0.85"></circle><circle cx="138.5" cy="233.1" r="0.5" fill="#9fc4ff" opacity="0.47"></circle><circle cx="65.5" cy="40.1" r="0.55" fill="#ffffff" opacity="0.70"></circle><circle cx="221.2" cy="141.9" r="0.7" fill="#dbe8ff" opacity="0.87"></circle><circle cx="138.8" cy="98.2" r="0.7" fill="#fff0d8" opacity="0.40"></circle><circle cx="234.4" cy="53.8" r="0.5" fill="#9fc4ff" opacity="0.42"></circle><circle cx="241.2" cy="120.0" r="0.5" fill="#fff0d8" opacity="0.40"></circle><circle cx="227.9" cy="118.1" r="0.5" fill="#dbe8ff" opacity="0.95"></circle><circle cx="258.8" cy="51.1" r="0.5" fill="#ffffff" opacity="0.54"></circle><circle cx="207.4" cy="90.7" r="0.5" fill="#9fc4ff" opacity="0.68"></circle><circle cx="54.6" cy="65.6" r="0.5" fill="#dbe8ff" opacity="0.65"></circle><circle cx="80.6" cy="90.3" r="0.45" fill="#b8d4ff" opacity="0.76"></circle><circle cx="41.1" cy="60.2" r="0.7" fill="#ffffff" opacity="0.88"></circle><circle cx="299.4" cy="209.7" r="0.5" fill="#fff0d8" opacity="0.31"></circle><circle cx="97.6" cy="192.7" r="0.55" fill="#b8d4ff" opacity="0.72"></circle><circle cx="118.2" cy="59.6" r="0.4" fill="#9fc4ff" opacity="0.38"></circle><circle cx="178.6" cy="7.9" r="0.5" fill="#fff0d8" opacity="0.54"></circle><circle cx="163.2" cy="34.0" r="0.6" fill="#b8d4ff" opacity="0.63"></circle><circle cx="217.6" cy="166.5" r="0.45" fill="#b8d4ff" opacity="0.87"></circle><circle cx="160.5" cy="112.3" r="0.45" fill="#b8d4ff" opacity="0.52"></circle><circle cx="67.8" cy="73.0" r="0.5" fill="#dbe8ff" opacity="0.68"></circle><circle cx="12.2" cy="6.1" r="0.6" fill="#ffffff" opacity="0.59"></circle><circle cx="242.6" cy="243.9" r="0.5" fill="#ffffff" opacity="0.71"></circle><circle cx="275.7" cy="54.1" r="0.6" fill="#ffffff" opacity="0.50"></circle><circle cx="286.5" cy="217.1" r="0.45" fill="#b8d4ff" opacity="0.80"></circle><circle cx="27.0" cy="106.9" r="0.5" fill="#fff0d8" opacity="0.60"></circle><circle cx="115.0" cy="82.0" r="0.5" fill="#dbe8ff" opacity="0.74"></circle><circle cx="47.6" cy="100.6" r="0.5" fill="#b8d4ff" opacity="0.79"></circle><circle cx="199.6" cy="60.0" r="0.4" fill="#fff0d8" opacity="0.77"></circle><circle cx="241.3" cy="119.6" r="0.5" fill="#9fc4ff" opacity="0.74"></circle><circle cx="92.6" cy="228.6" r="0.5" fill="#ffffff" opacity="0.33"></circle><circle cx="273.7" cy="68.0" r="0.5" fill="#9fc4ff" opacity="0.60"></circle><circle cx="90.0" cy="179.8" r="0.5" fill="#ffffff" opacity="0.30"></circle><circle cx="104.1" cy="222.9" r="0.55" fill="#dbe8ff" opacity="0.46"></circle><circle cx="192.7" cy="96.1" r="0.5" fill="#b8d4ff" opacity="0.92"></circle><circle cx="9.3" cy="176.8" r="0.45" fill="#ffffff" opacity="0.79"></circle><circle cx="186.2" cy="102.7" r="0.5" fill="#ffffff" opacity="0.29"></circle><circle cx="248.9" cy="219.9" r="0.5" fill="#fff0d8" opacity="0.93"></circle><circle cx="11.4" cy="34.0" r="0.55" fill="#fff0d8" opacity="0.44"></circle><circle cx="108.1" cy="244.2" r="0.45" fill="#b8d4ff" opacity="0.67"></circle><circle cx="68.5" cy="170.0" r="0.45" fill="#9fc4ff" opacity="0.61"></circle><circle cx="293.9" cy="0.9" r="0.55" fill="#9fc4ff" opacity="0.60"></circle><circle cx="23.7" cy="205.9" r="0.7" fill="#b8d4ff" opacity="0.73"></circle><circle cx="79.2" cy="26.0" r="0.4" fill="#dbe8ff" opacity="0.47"></circle><circle cx="208.6" cy="171.6" r="0.45" fill="#dbe8ff" opacity="0.83"></circle><circle cx="99.9" cy="172.3" r="0.7" fill="#b8d4ff" opacity="0.64"></circle><circle cx="124.4" cy="91.7" r="0.6" fill="#dbe8ff" opacity="0.62"></circle><circle cx="193.9" cy="90.6" r="0.6" fill="#9fc4ff" opacity="0.37"></circle><circle cx="221.3" cy="219.4" r="0.4" fill="#b8d4ff" opacity="0.82"></circle><circle cx="33.8" cy="112.9" r="0.7" fill="#ffffff" opacity="0.73"></circle><circle cx="48.8" cy="216.6" r="0.7" fill="#b8d4ff" opacity="0.59"></circle><circle cx="76.2" cy="126.9" r="0.7" fill="#b8d4ff" opacity="0.74"></circle><circle cx="214.8" cy="63.0" r="0.6" fill="#dbe8ff" opacity="0.73"></circle><circle cx="100.2" cy="189.8" r="0.7" fill="#dbe8ff" opacity="0.64"></circle><circle cx="170.2" cy="105.1" r="0.6" fill="#b8d4ff" opacity="0.34"></circle><circle cx="240.4" cy="31.3" r="0.5" fill="#b8d4ff" opacity="0.68"></circle><circle cx="69.3" cy="46.2" r="0.4" fill="#dbe8ff" opacity="0.58"></circle><circle cx="80.4" cy="67.8" r="0.5" fill="#fff0d8" opacity="0.69"></circle><circle cx="116.0" cy="169.8" r="0.45" fill="#ffffff" opacity="0.28"></circle><circle cx="261.2" cy="48.5" r="0.5" fill="#ffffff" opacity="0.76"></circle><circle cx="121.4" cy="226.2" r="0.7" fill="#fff0d8" opacity="0.63"></circle><circle cx="51.4" cy="16.8" r="0.5" fill="#b8d4ff" opacity="0.81"></circle><circle cx="67.1" cy="180.5" r="0.5" fill="#9fc4ff" opacity="0.79"></circle><circle cx="116.8" cy="173.5" r="0.55" fill="#dbe8ff" opacity="0.45"></circle><circle cx="132.7" cy="208.5" r="0.55" fill="#b8d4ff" opacity="0.90"></circle><circle cx="264.2" cy="108.2" r="0.45" fill="#ffffff" opacity="0.48"></circle><circle cx="81.1" cy="142.2" r="0.5" fill="#b8d4ff" opacity="0.69"></circle><circle cx="96.6" cy="20.3" r="0.45" fill="#b8d4ff" opacity="0.51"></circle><circle cx="167.7" cy="37.9" r="0.4" fill="#b8d4ff" opacity="0.87"></circle><circle cx="201.1" cy="1.0" r="0.5" fill="#dbe8ff" opacity="0.59"></circle><circle cx="297.5" cy="102.1" r="0.4" fill="#9fc4ff" opacity="0.54"></circle><circle cx="118.8" cy="14.4" r="0.55" fill="#9fc4ff" opacity="0.68"></circle><circle cx="75.7" cy="47.2" r="0.5" fill="#fff0d8" opacity="0.86"></circle><circle cx="171.4" cy="235.2" r="0.4" fill="#ffffff" opacity="0.37"></circle><circle cx="283.4" cy="134.8" r="0.6" fill="#b8d4ff" opacity="0.30"></circle><circle cx="7.2" cy="138.9" r="0.4" fill="#ffffff" opacity="0.61"></circle><circle cx="265.9" cy="15.9" r="0.5" fill="#9fc4ff" opacity="0.26"></circle><circle cx="79.5" cy="61.3" r="0.6" fill="#b8d4ff" opacity="0.60"></circle><circle cx="240.9" cy="206.9" r="0.7" fill="#ffffff" opacity="0.81"></circle><circle cx="280.8" cy="120.5" r="0.7" fill="#b8d4ff" opacity="0.74"></circle><circle cx="269.7" cy="155.9" r="0.4" fill="#dbe8ff" opacity="0.65"></circle><circle cx="97.1" cy="181.1" r="0.55" fill="#b8d4ff" opacity="0.71"></circle><circle cx="188.1" cy="112.4" r="0.5" fill="#b8d4ff" opacity="0.45"></circle><circle cx="178.3" cy="66.2" r="0.45" fill="#dbe8ff" opacity="0.77"></circle><circle cx="14.1" cy="32.7" r="0.5" fill="#dbe8ff" opacity="0.73"></circle><circle cx="104.2" cy="38.9" r="0.5" fill="#fff0d8" opacity="0.50"></circle><circle cx="6.6" cy="99.9" r="0.4" fill="#b8d4ff" opacity="0.53"></circle><circle cx="285.2" cy="210.0" r="0.7" fill="#dbe8ff" opacity="0.39"></circle><circle cx="96.3" cy="188.5" r="0.4" fill="#b8d4ff" opacity="0.66"></circle><circle cx="129.0" cy="240.7" r="0.45" fill="#dbe8ff" opacity="0.60"></circle><circle cx="243.8" cy="17.5" r="0.5" fill="#b8d4ff" opacity="0.91"></circle><circle cx="264.4" cy="194.4" r="0.55" fill="#dbe8ff" opacity="0.94"></circle><circle cx="219.1" cy="165.6" r="0.6" fill="#9fc4ff" opacity="0.29"></circle><circle cx="184.9" cy="221.9" r="0.7" fill="#fff0d8" opacity="0.75"></circle><circle cx="151.5" cy="141.9" r="0.4" fill="#fff0d8" opacity="0.33"></circle><circle cx="130.9" cy="116.8" r="0.7" fill="#dbe8ff" opacity="0.52"></circle><circle cx="112.6" cy="135.3" r="0.4" fill="#ffffff" opacity="0.61"></circle><circle cx="158.5" cy="112.9" r="0.5" fill="#9fc4ff" opacity="0.67"></circle><circle cx="16.4" cy="81.2" r="0.55" fill="#b8d4ff" opacity="0.58"></circle><circle cx="221.4" cy="78.2" r="0.6" fill="#9fc4ff" opacity="0.58"></circle><circle cx="120.6" cy="216.9" r="0.45" fill="#fff0d8" opacity="0.78"></circle><circle cx="33.3" cy="46.7" r="0.6" fill="#dbe8ff" opacity="0.80"></circle><circle cx="248.8" cy="199.4" r="0.55" fill="#b8d4ff" opacity="0.43"></circle><circle cx="19.4" cy="217.5" r="0.6" fill="#9fc4ff" opacity="0.49"></circle><circle cx="242.2" cy="113.5" r="0.55" fill="#fff0d8" opacity="0.26"></circle><circle cx="58.8" cy="69.9" r="0.6" fill="#ffffff" opacity="0.42"></circle><circle cx="166.5" cy="196.8" r="0.5" fill="#ffffff" opacity="0.86"></circle><circle cx="240.0" cy="213.8" r="0.7" fill="#ffffff" opacity="0.86"></circle><circle cx="239.0" cy="37.9" r="0.5" fill="#b8d4ff" opacity="0.37"></circle><circle cx="11.0" cy="86.4" r="0.7" fill="#b8d4ff" opacity="0.40"></circle><circle cx="35.2" cy="45.4" r="0.5" fill="#9fc4ff" opacity="0.27"></circle><circle cx="139.7" cy="122.3" r="0.4" fill="#dbe8ff" opacity="0.94"></circle><circle cx="159.7" cy="79.1" r="0.6" fill="#9fc4ff" opacity="0.93"></circle><circle cx="200.5" cy="107.7" r="0.4" fill="#b8d4ff" opacity="0.82"></circle><circle cx="253.4" cy="236.5" r="0.6" fill="#dbe8ff" opacity="0.67"></circle><circle cx="54.2" cy="32.0" r="0.6" fill="#ffffff" opacity="0.66"></circle><circle cx="38.7" cy="29.0" r="0.5" fill="#b8d4ff" opacity="0.68"></circle><circle cx="92.2" cy="2.0" r="0.4" fill="#b8d4ff" opacity="0.73"></circle><circle cx="261.1" cy="192.4" r="0.45" fill="#b8d4ff" opacity="0.35"></circle><circle cx="127.4" cy="205.0" r="0.5" fill="#dbe8ff" opacity="0.45"></circle><circle cx="151.9" cy="235.4" r="0.5" fill="#fff0d8" opacity="0.61"></circle><circle cx="70.5" cy="144.8" r="0.5" fill="#b8d4ff" opacity="0.34"></circle><circle cx="285.6" cy="19.5" r="0.6" fill="#fff0d8" opacity="0.57"></circle><circle cx="116.3" cy="185.8" r="0.55" fill="#ffffff" opacity="0.40"></circle><circle cx="110.1" cy="83.3" r="0.55" fill="#b8d4ff" opacity="0.56"></circle><circle cx="87.9" cy="173.7" r="0.6" fill="#ffffff" opacity="0.68"></circle><circle cx="123.5" cy="33.0" r="0.7" fill="#fff0d8" opacity="0.43"></circle><circle cx="83.5" cy="25.5" r="0.7" fill="#ffffff" opacity="0.79"></circle><circle cx="163.8" cy="24.9" r="0.45" fill="#b8d4ff" opacity="0.31"></circle><circle cx="4.8" cy="7.6" r="0.55" fill="#b8d4ff" opacity="0.72"></circle><circle cx="297.0" cy="203.9" r="0.7" fill="#dbe8ff" opacity="0.27"></circle><circle cx="140.8" cy="90.4" r="0.5" fill="#fff0d8" opacity="0.60"></circle><circle cx="201.3" cy="151.4" r="0.45" fill="#fff0d8" opacity="0.93"></circle><circle cx="130.0" cy="57.5" r="0.55" fill="#ffffff" opacity="0.74"></circle><circle cx="20.0" cy="115.6" r="0.5" fill="#dbe8ff" opacity="0.80"></circle><circle cx="155.4" cy="146.1" r="0.5" fill="#dbe8ff" opacity="0.51"></circle><circle cx="154.7" cy="24.0" r="0.7" fill="#dbe8ff" opacity="0.31"></circle><circle cx="287.5" cy="174.0" r="0.7" fill="#b8d4ff" opacity="0.77"></circle><circle cx="199.0" cy="242.5" r="0.5" fill="#ffffff" opacity="0.79"></circle><circle cx="129.9" cy="39.0" r="0.5" fill="#ffffff" opacity="0.85"></circle><circle cx="32.7" cy="103.2" r="0.55" fill="#ffffff" opacity="0.62"></circle><circle cx="232.9" cy="23.6" r="0.55" fill="#ffffff" opacity="0.64"></circle><circle cx="170.4" cy="32.4" r="0.4" fill="#b8d4ff" opacity="0.61"></circle><circle cx="88.2" cy="194.4" r="0.45" fill="#fff0d8" opacity="0.66"></circle><circle cx="16.3" cy="54.4" r="0.5" fill="#ffffff" opacity="0.37"></circle><circle cx="137.8" cy="212.7" r="0.4" fill="#9fc4ff" opacity="0.82"></circle><circle cx="46.5" cy="242.6" r="0.55" fill="#9fc4ff" opacity="0.37"></circle><circle cx="183.7" cy="216.0" r="0.4" fill="#ffffff" opacity="0.54"></circle><circle cx="68.7" cy="199.3" r="0.4" fill="#fff0d8" opacity="0.76"></circle><circle cx="47.0" cy="132.8" r="0.4" fill="#fff0d8" opacity="0.53"></circle><circle cx="90.2" cy="241.6" r="0.6" fill="#ffffff" opacity="0.78"></circle><circle cx="116.9" cy="74.9" r="0.45" fill="#ffffff" opacity="0.43"></circle><circle cx="197.1" cy="104.8" r="0.5" fill="#9fc4ff" opacity="0.39"></circle><circle cx="283.9" cy="142.0" r="0.55" fill="#ffffff" opacity="0.90"></circle><circle cx="118.3" cy="74.8" r="0.6" fill="#dbe8ff" opacity="0.67"></circle><circle cx="110.4" cy="107.3" r="0.5" fill="#fff0d8" opacity="0.52"></circle><circle cx="100.2" cy="29.2" r="0.5" fill="#ffffff" opacity="0.83"></circle><circle cx="49.0" cy="95.5" r="0.5" fill="#dbe8ff" opacity="0.53"></circle><circle cx="202.5" cy="178.3" r="0.4" fill="#fff0d8" opacity="0.47"></circle><circle cx="285.3" cy="130.0" r="0.55" fill="#ffffff" opacity="0.59"></circle><circle cx="112.0" cy="148.3" r="0.4" fill="#9fc4ff" opacity="0.25"></circle><circle cx="107.2" cy="61.6" r="0.55" fill="#b8d4ff" opacity="0.74"></circle><circle cx="62.9" cy="190.7" r="0.4" fill="#fff0d8" opacity="0.47"></circle><circle cx="35.4" cy="189.6" r="0.5" fill="#ffffff" opacity="0.29"></circle><circle cx="64.0" cy="147.4" r="0.7" fill="#fff0d8" opacity="0.81"></circle><circle cx="194.2" cy="93.3" r="0.4" fill="#ffffff" opacity="0.45"></circle><circle cx="25.6" cy="246.0" r="0.7" fill="#ffffff" opacity="0.43"></circle><circle cx="95.2" cy="204.8" r="0.7" fill="#b8d4ff" opacity="0.45"></circle><circle cx="17.0" cy="190.9" r="0.4" fill="#ffffff" opacity="0.53"></circle><circle cx="165.6" cy="231.8" r="0.6" fill="#9fc4ff" opacity="0.75"></circle><circle cx="280.3" cy="188.2" r="0.55" fill="#fff0d8" opacity="0.63"></circle><circle cx="125.5" cy="169.9" r="0.7" fill="#ffffff" opacity="0.30"></circle><circle cx="132.2" cy="187.9" r="0.5" fill="#fff0d8" opacity="0.78"></circle><circle cx="240.3" cy="111.3" r="0.6" fill="#ffffff" opacity="0.76"></circle><circle cx="287.0" cy="89.0" r="0.7" fill="#ffffff" opacity="0.63"></circle><circle cx="210.9" cy="99.3" r="0.6" fill="#9fc4ff" opacity="0.92"></circle><circle cx="34.2" cy="217.0" r="0.4" fill="#9fc4ff" opacity="0.54"></circle><circle cx="42.0" cy="236.9" r="0.45" fill="#fff0d8" opacity="0.86"></circle><circle cx="122.3" cy="224.2" r="0.5" fill="#fff0d8" opacity="0.39"></circle><circle cx="148.1" cy="172.4" r="0.5" fill="#fff0d8" opacity="0.61"></circle><circle cx="31.6" cy="185.6" r="0.45" fill="#b8d4ff" opacity="0.79"></circle><circle cx="60.6" cy="86.6" r="0.45" fill="#fff0d8" opacity="0.71"></circle><circle cx="177.4" cy="130.0" r="0.5" fill="#9fc4ff" opacity="0.57"></circle><circle cx="252.7" cy="89.6" r="0.55" fill="#fff0d8" opacity="0.35"></circle><circle cx="98.4" cy="174.4" r="0.45" fill="#b8d4ff" opacity="0.69"></circle><circle cx="219.1" cy="143.7" r="0.5" fill="#b8d4ff" opacity="0.90"></circle><circle cx="113.3" cy="179.1" r="0.5" fill="#ffffff" opacity="0.89"></circle><circle cx="167.9" cy="243.9" r="0.55" fill="#fff0d8" opacity="0.57"></circle><circle cx="35.3" cy="46.6" r="0.55" fill="#b8d4ff" opacity="0.32"></circle><circle cx="150.2" cy="37.6" r="0.6" fill="#dbe8ff" opacity="0.50"></circle><circle cx="165.5" cy="83.3" r="0.45" fill="#b8d4ff" opacity="0.56"></circle><circle cx="241.7" cy="24.4" r="0.7" fill="#dbe8ff" opacity="0.36"></circle><circle cx="258.3" cy="184.4" r="0.5" fill="#dbe8ff" opacity="0.33"></circle><circle cx="174.7" cy="224.8" r="0.5" fill="#b8d4ff" opacity="0.73"></circle><circle cx="32.7" cy="196.9" r="0.7" fill="#b8d4ff" opacity="0.45"></circle><circle cx="33.1" cy="89.5" r="0.45" fill="#b8d4ff" opacity="0.63"></circle><circle cx="200.3" cy="71.6" r="0.55" fill="#fff0d8" opacity="0.34"></circle><circle cx="22.7" cy="7.3" r="0.7" fill="#9fc4ff" opacity="0.44"></circle><circle cx="45.7" cy="97.4" r="0.7" fill="#dbe8ff" opacity="0.85"></circle><circle cx="182.8" cy="135.9" r="0.6" fill="#9fc4ff" opacity="0.36"></circle><circle cx="232.6" cy="65.0" r="0.4" fill="#b8d4ff" opacity="0.55"></circle><circle cx="195.5" cy="135.6" r="0.5" fill="#b8d4ff" opacity="0.57"></circle><circle cx="103.7" cy="54.0" r="0.6" fill="#9fc4ff" opacity="0.60"></circle><circle cx="218.0" cy="221.4" r="0.4" fill="#ffffff" opacity="0.91"></circle><circle cx="172.5" cy="231.7" r="0.6" fill="#ffffff" opacity="0.30"></circle><circle cx="30.6" cy="141.4" r="0.4" fill="#b8d4ff" opacity="0.39"></circle><circle cx="92.8" cy="218.0" r="0.4" fill="#ffffff" opacity="0.91"></circle><circle cx="42.2" cy="103.3" r="0.45" fill="#9fc4ff" opacity="0.94"></circle><circle cx="162.7" cy="109.2" r="0.6" fill="#9fc4ff" opacity="0.38"></circle><circle cx="208.4" cy="153.1" r="0.45" fill="#ffffff" opacity="0.87"></circle><circle cx="125.2" cy="121.5" r="0.4" fill="#ffffff" opacity="0.74"></circle><circle cx="167.3" cy="243.1" r="0.55" fill="#b8d4ff" opacity="0.31"></circle><circle cx="76.8" cy="54.9" r="0.5" fill="#9fc4ff" opacity="0.91"></circle><circle cx="285.0" cy="231.3" r="0.7" fill="#ffffff" opacity="0.55"></circle><circle cx="182.7" cy="198.9" r="0.6" fill="#9fc4ff" opacity="0.65"></circle><circle cx="94.9" cy="42.4" r="0.7" fill="#ffffff" opacity="0.61"></circle><circle cx="32.7" cy="74.5" r="0.5" fill="#ffffff" opacity="0.92"></circle><circle cx="124.3" cy="37.3" r="0.45" fill="#9fc4ff" opacity="0.73"></circle><circle cx="254.0" cy="191.7" r="0.6" fill="#ffffff" opacity="0.82"></circle><circle cx="111.4" cy="239.5" r="0.45" fill="#dbe8ff" opacity="0.93"></circle><circle cx="122.3" cy="83.9" r="0.5" fill="#dbe8ff" opacity="0.52"></circle><circle cx="78.7" cy="146.4" r="0.55" fill="#9fc4ff" opacity="0.76"></circle><circle cx="202.5" cy="113.7" r="0.45" fill="#fff0d8" opacity="0.90"></circle><circle cx="52.7" cy="37.5" r="0.5" fill="#dbe8ff" opacity="0.57"></circle><circle cx="235.1" cy="83.2" r="0.45" fill="#9fc4ff" opacity="0.72"></circle><circle cx="78.1" cy="130.7" r="0.5" fill="#ffffff" opacity="0.65"></circle><circle cx="55.4" cy="58.1" r="0.5" fill="#dbe8ff" opacity="0.61"></circle><circle cx="202.2" cy="197.6" r="0.55" fill="#9fc4ff" opacity="0.31"></circle><circle cx="73.3" cy="54.5" r="0.5" fill="#dbe8ff" opacity="0.64"></circle><circle cx="111.2" cy="89.1" r="0.4" fill="#fff0d8" opacity="0.94"></circle><circle cx="300.0" cy="104.8" r="0.6" fill="#b8d4ff" opacity="0.80"></circle><circle cx="297.8" cy="51.7" r="0.5" fill="#ffffff" opacity="0.64"></circle><circle cx="142.8" cy="204.6" r="0.4" fill="#ffffff" opacity="0.29"></circle><circle cx="114.1" cy="16.3" r="0.45" fill="#dbe8ff" opacity="0.35"></circle><circle cx="48.0" cy="123.2" r="0.45" fill="#b8d4ff" opacity="0.90"></circle><circle cx="41.6" cy="34.1" r="0.7" fill="#ffffff" opacity="0.75"></circle><circle cx="57.8" cy="33.9" r="0.6" fill="#fff0d8" opacity="0.42"></circle><circle cx="110.2" cy="181.7" r="0.5" fill="#ffffff" opacity="0.35"></circle><circle cx="295.0" cy="181.4" r="0.6" fill="#b8d4ff" opacity="0.28"></circle><circle cx="96.4" cy="145.6" r="0.5" fill="#9fc4ff" opacity="0.62"></circle><circle cx="244.8" cy="110.6" r="0.7" fill="#ffffff" opacity="0.62"></circle><circle cx="24.4" cy="55.7" r="0.4" fill="#9fc4ff" opacity="0.90"></circle><circle cx="55.8" cy="241.3" r="0.6" fill="#b8d4ff" opacity="0.65"></circle><circle cx="145.1" cy="223.3" r="0.55" fill="#9fc4ff" opacity="0.57"></circle><circle cx="299.2" cy="122.1" r="0.4" fill="#fff0d8" opacity="0.38"></circle><circle cx="293.4" cy="6.1" r="0.7" fill="#9fc4ff" opacity="0.66"></circle><circle cx="15.6" cy="40.7" r="0.45" fill="#dbe8ff" opacity="0.53"></circle><circle cx="288.4" cy="6.1" r="0.5" fill="#fff0d8" opacity="0.81"></circle><circle cx="183.7" cy="15.8" r="0.4" fill="#ffffff" opacity="0.38"></circle><circle cx="49.9" cy="243.0" r="0.5" fill="#9fc4ff" opacity="0.43"></circle><circle cx="168.6" cy="171.9" r="0.5" fill="#b8d4ff" opacity="0.69"></circle><circle cx="49.9" cy="35.9" r="0.55" fill="#fff0d8" opacity="0.66"></circle><circle cx="128.9" cy="146.7" r="0.5" fill="#fff0d8" opacity="0.48"></circle><circle cx="70.0" cy="234.0" r="0.7" fill="#dbe8ff" opacity="0.87"></circle><circle cx="140.5" cy="140.4" r="0.5" fill="#b8d4ff" opacity="0.79"></circle><circle cx="70.5" cy="145.9" r="0.45" fill="#b8d4ff" opacity="0.74"></circle><circle cx="85.2" cy="24.2" r="0.6" fill="#fff0d8" opacity="0.25"></circle><circle cx="167.8" cy="124.3" r="0.7" fill="#fff0d8" opacity="0.61"></circle><circle cx="205.7" cy="165.7" r="0.5" fill="#9fc4ff" opacity="0.44"></circle><circle cx="254.1" cy="142.2" r="0.4" fill="#fff0d8" opacity="0.31"></circle><circle cx="191.8" cy="15.4" r="0.45" fill="#b8d4ff" opacity="0.93"></circle><circle cx="161.6" cy="12.6" r="0.5" fill="#dbe8ff" opacity="0.81"></circle><circle cx="175.0" cy="99.6" r="0.4" fill="#9fc4ff" opacity="0.43"></circle><circle cx="30.7" cy="88.3" r="0.4" fill="#fff0d8" opacity="0.91"></circle><circle cx="257.8" cy="37.9" r="0.5" fill="#9fc4ff" opacity="0.84"></circle><circle cx="150.9" cy="231.6" r="0.6" fill="#fff0d8" opacity="0.40"></circle><circle cx="241.0" cy="244.7" r="0.45" fill="#b8d4ff" opacity="0.73"></circle><circle cx="242.9" cy="200.3" r="0.45" fill="#fff0d8" opacity="0.33"></circle><circle cx="91.0" cy="61.0" r="0.7" fill="#9fc4ff" opacity="0.27"></circle><circle cx="197.4" cy="117.7" r="0.6" fill="#fff0d8" opacity="0.68"></circle><circle cx="279.8" cy="161.1" r="0.4" fill="#dbe8ff" opacity="0.93"></circle><circle cx="32.8" cy="245.5" r="0.7" fill="#b8d4ff" opacity="0.52"></circle><circle cx="55.8" cy="173.6" r="0.7" fill="#9fc4ff" opacity="0.43"></circle><circle cx="194.7" cy="187.3" r="0.6" fill="#fff0d8" opacity="0.29"></circle><circle cx="230.6" cy="196.3" r="0.7" fill="#b8d4ff" opacity="0.25"></circle><circle cx="283.0" cy="159.8" r="0.5" fill="#b8d4ff" opacity="0.41"></circle><circle cx="11.7" cy="220.9" r="0.5" fill="#dbe8ff" opacity="0.81"></circle><circle cx="69.3" cy="154.6" r="0.4" fill="#9fc4ff" opacity="0.74"></circle><circle cx="129.4" cy="116.7" r="0.6" fill="#b8d4ff" opacity="0.38"></circle><circle cx="205.9" cy="235.6" r="0.5" fill="#ffffff" opacity="0.48"></circle><circle cx="273.5" cy="72.6" r="0.55" fill="#fff0d8" opacity="0.68"></circle><circle cx="232.2" cy="83.3" r="0.5" fill="#fff0d8" opacity="0.40"></circle><circle cx="19.8" cy="24.2" r="0.6" fill="#fff0d8" opacity="0.62"></circle><circle cx="227.0" cy="131.5" r="0.5" fill="#9fc4ff" opacity="0.39"></circle><circle cx="109.3" cy="108.5" r="0.5" fill="#ffffff" opacity="0.30"></circle><circle cx="287.6" cy="73.9" r="0.7" fill="#9fc4ff" opacity="0.91"></circle><circle cx="124.3" cy="101.7" r="0.45" fill="#ffffff" opacity="0.80"></circle><circle cx="36.6" cy="108.2" r="0.6" fill="#9fc4ff" opacity="0.54"></circle><circle cx="242.6" cy="231.2" r="0.55" fill="#b8d4ff" opacity="0.88"></circle><circle cx="175.9" cy="104.9" r="0.4" fill="#dbe8ff" opacity="0.62"></circle><circle cx="54.6" cy="246.7" r="0.55" fill="#9fc4ff" opacity="0.36"></circle><circle cx="290.7" cy="196.8" r="0.55" fill="#b8d4ff" opacity="0.76"></circle><circle cx="80.4" cy="199.3" r="0.4" fill="#fff0d8" opacity="0.74"></circle><circle cx="18.2" cy="244.0" r="0.5" fill="#b8d4ff" opacity="0.39"></circle><circle cx="266.5" cy="14.0" r="0.4" fill="#fff0d8" opacity="0.25"></circle><circle cx="208.3" cy="109.4" r="0.45" fill="#fff0d8" opacity="0.95"></circle><circle cx="172.0" cy="186.1" r="0.5" fill="#dbe8ff" opacity="0.82"></circle><circle cx="204.4" cy="153.9" r="0.4" fill="#9fc4ff" opacity="0.31"></circle><circle cx="38.6" cy="13.7" r="0.5" fill="#fff0d8" opacity="0.53"></circle><circle cx="21.9" cy="97.7" r="0.5" fill="#dbe8ff" opacity="0.68"></circle><circle cx="286.1" cy="213.0" r="0.5" fill="#b8d4ff" opacity="0.94"></circle><circle cx="277.8" cy="159.5" r="0.5" fill="#dbe8ff" opacity="0.46"></circle><circle cx="250.6" cy="180.2" r="0.55" fill="#fff0d8" opacity="0.54"></circle><circle cx="260.9" cy="47.9" r="0.4" fill="#b8d4ff" opacity="0.80"></circle><circle cx="134.5" cy="91.4" r="0.5" fill="#fff0d8" opacity="0.39"></circle><circle cx="94.7" cy="156.0" r="0.5" fill="#9fc4ff" opacity="0.86"></circle><circle cx="231.8" cy="113.8" r="0.5" fill="#9fc4ff" opacity="0.69"></circle><circle cx="136.4" cy="94.0" r="0.55" fill="#fff0d8" opacity="0.93"></circle><circle cx="265.8" cy="18.7" r="0.45" fill="#9fc4ff" opacity="0.46"></circle><circle cx="284.9" cy="163.9" r="0.6" fill="#dbe8ff" opacity="0.57"></circle><circle cx="196.0" cy="56.5" r="0.7" fill="#9fc4ff" opacity="0.31"></circle><circle cx="294.0" cy="85.4" r="0.6" fill="#fff0d8" opacity="0.52"></circle><circle cx="103.3" cy="106.7" r="0.4" fill="#dbe8ff" opacity="0.68"></circle><circle cx="259.1" cy="74.9" r="0.45" fill="#fff0d8" opacity="0.77"></circle><circle cx="17.9" cy="145.7" r="0.7" fill="#fff0d8" opacity="0.40"></circle><circle cx="20.0" cy="244.4" r="0.6" fill="#b8d4ff" opacity="0.78"></circle><circle cx="173.7" cy="62.9" r="0.6" fill="#fff0d8" opacity="0.73"></circle><circle cx="163.3" cy="246.8" r="0.45" fill="#9fc4ff" opacity="0.78"></circle><circle cx="97.4" cy="181.6" r="0.4" fill="#9fc4ff" opacity="0.44"></circle><circle cx="103.0" cy="238.3" r="0.5" fill="#fff0d8" opacity="0.37"></circle><circle cx="199.0" cy="72.3" r="0.7" fill="#dbe8ff" opacity="0.93"></circle><circle cx="29.4" cy="12.1" r="0.5" fill="#fff0d8" opacity="0.62"></circle><circle cx="170.8" cy="238.4" r="0.5" fill="#ffffff" opacity="0.55"></circle><circle cx="22.6" cy="75.1" r="0.6" fill="#b8d4ff" opacity="0.37"></circle><circle cx="248.5" cy="95.0" r="0.5" fill="#9fc4ff" opacity="0.35"></circle><circle cx="161.2" cy="6.0" r="0.5" fill="#fff0d8" opacity="0.53"></circle><circle cx="44.6" cy="77.8" r="0.7" fill="#9fc4ff" opacity="0.83"></circle><circle cx="74.9" cy="44.5" r="0.4" fill="#ffffff" opacity="0.89"></circle><circle cx="221.7" cy="66.1" r="0.5" fill="#9fc4ff" opacity="0.29"></circle><circle cx="8.4" cy="204.7" r="0.7" fill="#9fc4ff" opacity="0.48"></circle><circle cx="211.0" cy="174.8" r="0.5" fill="#dbe8ff" opacity="0.82"></circle><circle cx="253.7" cy="175.3" r="0.4" fill="#9fc4ff" opacity="0.56"></circle><circle cx="84.4" cy="126.3" r="0.5" fill="#dbe8ff" opacity="0.41"></circle><circle cx="180.6" cy="79.9" r="0.6" fill="#b8d4ff" opacity="0.92"></circle><circle cx="236.4" cy="221.7" r="0.45" fill="#9fc4ff" opacity="0.83"></circle><circle cx="203.1" cy="42.9" r="0.5" fill="#b8d4ff" opacity="0.67"></circle><circle cx="64.8" cy="220.7" r="0.7" fill="#fff0d8" opacity="0.85"></circle><circle cx="109.3" cy="57.2" r="0.6" fill="#ffffff" opacity="0.72"></circle><circle cx="230.0" cy="170.1" r="0.55" fill="#b8d4ff" opacity="0.27"></circle><circle cx="13.3" cy="88.3" r="0.5" fill="#fff0d8" opacity="0.67"></circle><circle cx="18.8" cy="25.5" r="0.4" fill="#9fc4ff" opacity="0.89"></circle><circle cx="52.9" cy="68.2" r="0.6" fill="#b8d4ff" opacity="0.36"></circle><circle cx="16.1" cy="194.9" r="0.45" fill="#b8d4ff" opacity="0.64"></circle><circle cx="74.9" cy="0.9" r="0.5" fill="#ffffff" opacity="0.46"></circle><circle cx="4.9" cy="77.6" r="0.55" fill="#dbe8ff" opacity="0.37"></circle><circle cx="33.9" cy="211.5" r="0.5" fill="#dbe8ff" opacity="0.72"></circle><circle cx="93.6" cy="221.8" r="0.7" fill="#fff0d8" opacity="0.86"></circle><circle cx="207.7" cy="125.1" r="0.5" fill="#b8d4ff" opacity="0.82"></circle><circle cx="151.2" cy="117.2" r="0.55" fill="#dbe8ff" opacity="0.65"></circle><circle cx="85.5" cy="74.0" r="0.5" fill="#ffffff" opacity="0.27"></circle><circle cx="186.1" cy="71.4" r="0.45" fill="#9fc4ff" opacity="0.51"></circle><circle cx="205.1" cy="172.9" r="0.6" fill="#ffffff" opacity="0.91"></circle><circle cx="119.2" cy="138.2" r="0.55" fill="#dbe8ff" opacity="0.94"></circle><circle cx="22.3" cy="61.7" r="0.5" fill="#9fc4ff" opacity="0.63"></circle><circle cx="166.8" cy="9.7" r="0.5" fill="#ffffff" opacity="0.61"></circle><circle cx="159.6" cy="28.2" r="0.7" fill="#fff0d8" opacity="0.35"></circle><circle cx="214.5" cy="187.7" r="0.5" fill="#fff0d8" opacity="0.64"></circle><circle cx="177.5" cy="136.7" r="0.4" fill="#dbe8ff" opacity="0.66"></circle><circle cx="20.6" cy="186.1" r="0.45" fill="#dbe8ff" opacity="0.72"></circle><circle cx="280.7" cy="163.1" r="0.7" fill="#9fc4ff" opacity="0.49"></circle><circle cx="276.5" cy="153.7" r="0.4" fill="#dbe8ff" opacity="0.40"></circle><circle cx="181.2" cy="60.7" r="0.5" fill="#9fc4ff" opacity="0.48"></circle><circle cx="156.9" cy="244.1" r="0.45" fill="#dbe8ff" opacity="0.43"></circle><circle cx="227.5" cy="14.3" r="0.4" fill="#dbe8ff" opacity="0.76"></circle><circle cx="237.3" cy="158.6" r="0.6" fill="#fff0d8" opacity="0.36"></circle><circle cx="193.5" cy="246.1" r="0.7" fill="#dbe8ff" opacity="0.43"></circle><circle cx="95.9" cy="28.8" r="0.4" fill="#ffffff" opacity="0.90"></circle><circle cx="259.8" cy="76.0" r="0.7" fill="#fff0d8" opacity="0.71"></circle><circle cx="214.5" cy="46.3" r="0.5" fill="#ffffff" opacity="0.71"></circle><circle cx="72.0" cy="69.7" r="0.45" fill="#ffffff" opacity="0.72"></circle><circle cx="75.5" cy="173.8" r="0.5" fill="#ffffff" opacity="0.45"></circle><circle cx="293.9" cy="167.4" r="0.6" fill="#b8d4ff" opacity="0.73"></circle><circle cx="148.0" cy="14.7" r="0.5" fill="#ffffff" opacity="0.66"></circle><circle cx="159.3" cy="12.2" r="0.4" fill="#9fc4ff" opacity="0.50"></circle><circle cx="111.4" cy="82.5" r="0.45" fill="#9fc4ff" opacity="0.91"></circle><circle cx="54.1" cy="125.1" r="0.5" fill="#9fc4ff" opacity="0.71"></circle><circle cx="188.0" cy="112.1" r="0.5" fill="#ffffff" opacity="0.76"></circle><circle cx="162.8" cy="240.2" r="0.45" fill="#fff0d8" opacity="0.38"></circle><circle cx="67.6" cy="109.0" r="0.5" fill="#b8d4ff" opacity="0.77"></circle><circle cx="216.7" cy="12.9" r="0.7" fill="#b8d4ff" opacity="0.30"></circle><circle cx="48.7" cy="9.4" r="0.4" fill="#fff0d8" opacity="0.42"></circle><circle cx="43.5" cy="178.3" r="0.45" fill="#9fc4ff" opacity="0.84"></circle><circle cx="296.6" cy="200.8" r="0.55" fill="#b8d4ff" opacity="0.33"></circle><circle cx="54.0" cy="112.6" r="0.5" fill="#9fc4ff" opacity="0.39"></circle><circle cx="50.4" cy="42.2" r="0.55" fill="#fff0d8" opacity="0.80"></circle><circle cx="44.9" cy="142.0" r="0.55" fill="#ffffff" opacity="0.32"></circle><circle cx="142.3" cy="9.9" r="0.55" fill="#b8d4ff" opacity="0.27"></circle><circle cx="280.6" cy="105.7" r="0.7" fill="#fff0d8" opacity="0.66"></circle><circle cx="86.9" cy="71.5" r="0.6" fill="#fff0d8" opacity="0.34"></circle><circle cx="240.0" cy="220.4" r="0.6" fill="#ffffff" opacity="0.33"></circle><circle cx="79.1" cy="74.2" r="0.45" fill="#ffffff" opacity="0.78"></circle><circle cx="209.8" cy="231.2" r="0.45" fill="#b8d4ff" opacity="0.69"></circle><circle cx="229.7" cy="28.2" r="0.4" fill="#b8d4ff" opacity="0.77"></circle><circle cx="177.2" cy="169.2" r="0.55" fill="#9fc4ff" opacity="0.88"></circle><circle cx="266.8" cy="69.3" r="0.45" fill="#b8d4ff" opacity="0.84"></circle><circle cx="288.1" cy="35.9" r="0.5" fill="#ffffff" opacity="0.60"></circle><circle cx="39.5" cy="195.2" r="0.4" fill="#9fc4ff" opacity="0.55"></circle><circle cx="83.9" cy="80.7" r="0.55" fill="#b8d4ff" opacity="0.52"></circle><circle cx="134.3" cy="214.3" r="0.4" fill="#b8d4ff" opacity="0.43"></circle><circle cx="151.8" cy="151.4" r="0.55" fill="#dbe8ff" opacity="0.84"></circle><circle cx="114.1" cy="151.9" r="0.6" fill="#ffffff" opacity="0.25"></circle><circle cx="206.3" cy="156.8" r="0.6" fill="#9fc4ff" opacity="0.44"></circle><circle cx="191.3" cy="16.3" r="0.6" fill="#fff0d8" opacity="0.89"></circle><circle cx="53.4" cy="115.7" r="0.5" fill="#fff0d8" opacity="0.90"></circle><circle cx="80.5" cy="140.5" r="0.45" fill="#fff0d8" opacity="0.47"></circle><circle cx="161.5" cy="154.7" r="0.7" fill="#dbe8ff" opacity="0.71"></circle><circle cx="37.7" cy="149.7" r="0.6" fill="#fff0d8" opacity="0.27"></circle><circle cx="253.4" cy="136.4" r="0.45" fill="#b8d4ff" opacity="0.65"></circle><circle cx="290.4" cy="14.6" r="0.4" fill="#dbe8ff" opacity="0.90"></circle><circle cx="137.8" cy="206.1" r="0.6" fill="#fff0d8" opacity="0.43"></circle><circle cx="256.9" cy="93.0" r="0.4" fill="#ffffff" opacity="0.29"></circle><circle cx="142.8" cy="25.2" r="0.55" fill="#ffffff" opacity="0.36"></circle><circle cx="48.1" cy="87.1" r="0.4" fill="#b8d4ff" opacity="0.67"></circle><circle cx="275.6" cy="93.2" r="0.6" fill="#fff0d8" opacity="0.76"></circle><circle cx="166.2" cy="145.5" r="0.7" fill="#9fc4ff" opacity="0.29"></circle><circle cx="292.5" cy="71.7" r="0.7" fill="#fff0d8" opacity="0.45"></circle><circle cx="140.5" cy="2.7" r="0.5" fill="#fff0d8" opacity="0.85"></circle><circle cx="180.5" cy="127.4" r="0.55" fill="#9fc4ff" opacity="0.44"></circle><circle cx="39.5" cy="151.7" r="0.6" fill="#b8d4ff" opacity="0.32"></circle><circle cx="22.1" cy="152.1" r="0.5" fill="#fff0d8" opacity="0.81"></circle><circle cx="288.2" cy="171.4" r="0.5" fill="#b8d4ff" opacity="0.73"></circle><circle cx="24.2" cy="29.4" r="0.6" fill="#ffffff" opacity="0.53"></circle><circle cx="288.7" cy="238.3" r="0.5" fill="#fff0d8" opacity="0.35"></circle><circle cx="29.4" cy="57.6" r="0.45" fill="#b8d4ff" opacity="0.56"></circle><circle cx="93.2" cy="96.0" r="0.45" fill="#ffffff" opacity="0.76"></circle><circle cx="265.7" cy="120.7" r="0.45" fill="#ffffff" opacity="0.36"></circle><circle cx="267.1" cy="187.3" r="0.4" fill="#dbe8ff" opacity="0.65"></circle><circle cx="64.2" cy="111.5" r="0.55" fill="#b8d4ff" opacity="0.94"></circle><circle cx="280.7" cy="83.8" r="0.45" fill="#ffffff" opacity="0.55"></circle><circle cx="32.7" cy="9.3" r="0.6" fill="#fff0d8" opacity="0.48"></circle><circle cx="270.2" cy="197.7" r="0.45" fill="#9fc4ff" opacity="0.83"></circle><circle cx="53.5" cy="123.7" r="0.5" fill="#dbe8ff" opacity="0.89"></circle><circle cx="232.3" cy="239.4" r="0.5" fill="#fff0d8" opacity="0.90"></circle><circle cx="185.4" cy="80.1" r="0.6" fill="#ffffff" opacity="0.54"></circle><circle cx="245.0" cy="59.6" r="0.7" fill="#9fc4ff" opacity="0.63"></circle><circle cx="259.5" cy="62.2" r="0.55" fill="#dbe8ff" opacity="0.61"></circle><circle cx="178.5" cy="65.6" r="0.45" fill="#fff0d8" opacity="0.49"></circle><circle cx="260.6" cy="234.2" r="0.45" fill="#ffffff" opacity="0.57"></circle><circle cx="152.8" cy="57.8" r="0.45" fill="#fff0d8" opacity="0.83"></circle><circle cx="253.9" cy="121.5" r="0.45" fill="#dbe8ff" opacity="0.51"></circle><circle cx="67.6" cy="151.6" r="0.45" fill="#9fc4ff" opacity="0.34"></circle><circle cx="179.4" cy="153.3" r="0.7" fill="#fff0d8" opacity="0.83"></circle><circle cx="122.0" cy="162.1" r="0.5" fill="#b8d4ff" opacity="0.89"></circle><circle cx="37.0" cy="62.6" r="0.5" fill="#b8d4ff" opacity="0.50"></circle><circle cx="239.9" cy="169.1" r="0.7" fill="#ffffff" opacity="0.45"></circle><circle cx="75.4" cy="78.8" r="0.4" fill="#dbe8ff" opacity="0.93"></circle><circle cx="276.4" cy="75.7" r="0.5" fill="#dbe8ff" opacity="0.70"></circle><circle cx="294.1" cy="132.7" r="0.6" fill="#b8d4ff" opacity="0.31"></circle><circle cx="233.2" cy="122.4" r="0.4" fill="#b8d4ff" opacity="0.86"></circle><circle cx="209.8" cy="235.6" r="0.7" fill="#fff0d8" opacity="0.45"></circle><circle cx="241.8" cy="76.4" r="0.5" fill="#9fc4ff" opacity="0.27"></circle><circle cx="240.8" cy="81.5" r="0.45" fill="#fff0d8" opacity="0.26"></circle><circle cx="23.2" cy="198.0" r="0.55" fill="#dbe8ff" opacity="0.64"></circle><circle cx="136.0" cy="149.7" r="0.5" fill="#9fc4ff" opacity="0.47"></circle><circle cx="126.3" cy="88.4" r="0.45" fill="#9fc4ff" opacity="0.50"></circle><circle cx="37.0" cy="85.4" r="0.6" fill="#9fc4ff" opacity="0.31"></circle><circle cx="196.9" cy="126.0" r="0.45" fill="#dbe8ff" opacity="0.54"></circle><circle cx="89.8" cy="79.2" r="0.5" fill="#ffffff" opacity="0.88"></circle><circle cx="227.4" cy="161.4" r="0.5" fill="#b8d4ff" opacity="0.34"></circle><circle cx="200.8" cy="39.5" r="0.55" fill="#9fc4ff" opacity="0.86"></circle><circle cx="223.5" cy="223.9" r="0.55" fill="#fff0d8" opacity="0.65"></circle><circle cx="27.7" cy="36.3" r="0.4" fill="#b8d4ff" opacity="0.85"></circle><circle cx="34.2" cy="35.0" r="0.45" fill="#b8d4ff" opacity="0.65"></circle><circle cx="188.5" cy="152.5" r="0.4" fill="#fff0d8" opacity="0.84"></circle><circle cx="0.3" cy="136.9" r="0.4" fill="#dbe8ff" opacity="0.88"></circle><circle cx="20.8" cy="66.8" r="0.7" fill="#dbe8ff" opacity="0.72"></circle><circle cx="123.9" cy="130.1" r="0.45" fill="#ffffff" opacity="0.55"></circle><circle cx="77.2" cy="168.9" r="0.4" fill="#9fc4ff" opacity="0.63"></circle><circle cx="59.3" cy="133.2" r="0.55" fill="#dbe8ff" opacity="0.59"></circle><circle cx="250.6" cy="95.0" r="0.45" fill="#fff0d8" opacity="0.58"></circle><circle cx="53.4" cy="189.0" r="0.7" fill="#9fc4ff" opacity="0.60"></circle><circle cx="62.6" cy="30.1" r="0.45" fill="#ffffff" opacity="0.55"></circle><circle cx="273.0" cy="118.4" r="0.45" fill="#ffffff" opacity="0.89"></circle><circle cx="72.3" cy="162.1" r="0.6" fill="#b8d4ff" opacity="0.63"></circle><circle cx="131.1" cy="114.2" r="0.5" fill="#fff0d8" opacity="0.79"></circle><circle cx="151.7" cy="237.8" r="0.5" fill="#dbe8ff" opacity="0.93"></circle><circle cx="46.2" cy="131.5" r="0.55" fill="#ffffff" opacity="0.50"></circle><circle cx="165.0" cy="223.7" r="0.6" fill="#b8d4ff" opacity="0.91"></circle><circle cx="9.1" cy="79.2" r="0.5" fill="#dbe8ff" opacity="0.33"></circle><circle cx="17.7" cy="171.6" r="0.55" fill="#dbe8ff" opacity="0.52"></circle><circle cx="55.3" cy="85.3" r="0.5" fill="#dbe8ff" opacity="0.79"></circle><circle cx="55.9" cy="204.4" r="0.4" fill="#fff0d8" opacity="0.39"></circle><circle cx="94.6" cy="192.2" r="0.6" fill="#ffffff" opacity="0.84"></circle><circle cx="135.6" cy="88.8" r="0.5" fill="#b8d4ff" opacity="0.32"></circle><circle cx="280.2" cy="16.0" r="0.5" fill="#9fc4ff" opacity="0.67"></circle><circle cx="281.4" cy="42.8" r="0.5" fill="#dbe8ff" opacity="0.39"></circle><circle cx="36.4" cy="75.7" r="0.5" fill="#9fc4ff" opacity="0.30"></circle><circle cx="204.2" cy="51.0" r="0.5" fill="#9fc4ff" opacity="0.86"></circle><circle cx="10.1" cy="73.9" r="0.5" fill="#fff0d8" opacity="0.81"></circle><circle cx="282.8" cy="148.8" r="0.7" fill="#fff0d8" opacity="0.54"></circle><circle cx="73.6" cy="182.8" r="0.5" fill="#fff0d8" opacity="0.56"></circle><circle cx="18.9" cy="12.7" r="0.5" fill="#b8d4ff" opacity="0.44"></circle><circle cx="120.0" cy="141.3" r="0.5" fill="#fff0d8" opacity="0.51"></circle><circle cx="202.3" cy="83.9" r="0.5" fill="#ffffff" opacity="0.81"></circle><circle cx="81.0" cy="12.9" r="0.5" fill="#dbe8ff" opacity="0.78"></circle><circle cx="34.5" cy="7.4" r="0.5" fill="#ffffff" opacity="0.67"></circle><circle cx="108.1" cy="110.9" r="0.55" fill="#fff0d8" opacity="0.36"></circle><circle cx="30.4" cy="196.3" r="0.55" fill="#ffffff" opacity="0.71"></circle><circle cx="103.1" cy="187.8" r="0.55" fill="#dbe8ff" opacity="0.52"></circle><circle cx="202.2" cy="115.4" r="0.55" fill="#9fc4ff" opacity="0.88"></circle><circle cx="154.8" cy="247.2" r="0.4" fill="#9fc4ff" opacity="0.83"></circle><circle cx="161.1" cy="139.7" r="0.4" fill="#dbe8ff" opacity="0.67"></circle><circle cx="112.6" cy="237.1" r="0.45" fill="#b8d4ff" opacity="0.88"></circle><circle cx="43.3" cy="188.5" r="0.5" fill="#b8d4ff" opacity="0.33"></circle><circle cx="245.9" cy="107.9" r="0.5" fill="#fff0d8" opacity="0.41"></circle><circle cx="263.7" cy="194.3" r="0.5" fill="#fff0d8" opacity="0.92"></circle><circle cx="212.8" cy="182.9" r="0.4" fill="#9fc4ff" opacity="0.66"></circle><circle cx="23.1" cy="110.5" r="0.45" fill="#ffffff" opacity="0.49"></circle><circle cx="173.9" cy="95.4" r="0.5" fill="#fff0d8" opacity="0.34"></circle><circle cx="37.7" cy="138.2" r="0.55" fill="#b8d4ff" opacity="0.33"></circle><circle cx="115.3" cy="128.8" r="0.55" fill="#9fc4ff" opacity="0.55"></circle><circle cx="93.4" cy="4.8" r="0.6" fill="#9fc4ff" opacity="0.89"></circle><circle cx="68.5" cy="61.1" r="0.5" fill="#fff0d8" opacity="0.89"></circle><circle cx="181.9" cy="87.4" r="0.5" fill="#ffffff" opacity="0.47"></circle><circle cx="38.9" cy="233.1" r="0.6" fill="#ffffff" opacity="0.92"></circle><circle cx="197.5" cy="24.9" r="0.4" fill="#b8d4ff" opacity="0.80"></circle><circle cx="164.4" cy="111.1" r="0.5" fill="#9fc4ff" opacity="0.93"></circle><circle cx="141.8" cy="186.7" r="0.7" fill="#b8d4ff" opacity="0.89"></circle><circle cx="286.7" cy="150.6" r="0.6" fill="#dbe8ff" opacity="0.48"></circle><circle cx="44.0" cy="242.7" r="0.45" fill="#ffffff" opacity="0.37"></circle><circle cx="285.0" cy="231.3" r="0.7" fill="#b8d4ff" opacity="0.54"></circle><circle cx="170.0" cy="18.6" r="0.6" fill="#ffffff" opacity="0.90"></circle><circle cx="13.1" cy="15.3" r="0.6" fill="#ffffff" opacity="0.78"></circle><circle cx="268.1" cy="247.7" r="0.5" fill="#dbe8ff" opacity="0.85"></circle><circle cx="199.5" cy="173.4" r="0.5" fill="#ffffff" opacity="0.29"></circle><circle cx="228.4" cy="94.7" r="0.6" fill="#fff0d8" opacity="0.81"></circle><circle cx="283.0" cy="37.5" r="0.5" fill="#9fc4ff" opacity="0.73"></circle><circle cx="214.8" cy="39.1" r="0.5" fill="#dbe8ff" opacity="0.89"></circle><circle cx="41.2" cy="242.1" r="0.7" fill="#dbe8ff" opacity="0.74"></circle><circle cx="203.0" cy="5.2" r="0.7" fill="#dbe8ff" opacity="0.74"></circle><circle cx="219.5" cy="153.4" r="0.5" fill="#ffffff" opacity="0.31"></circle><circle cx="104.6" cy="247.3" r="0.7" fill="#ffffff" opacity="0.73"></circle><circle cx="200.4" cy="151.6" r="0.7" fill="#fff0d8" opacity="0.30"></circle><circle cx="137.9" cy="3.7" r="0.55" fill="#dbe8ff" opacity="0.67"></circle><circle cx="258.9" cy="153.0" r="0.5" fill="#b8d4ff" opacity="0.29"></circle><circle cx="187.4" cy="246.3" r="0.55" fill="#ffffff" opacity="0.39"></circle><circle cx="231.7" cy="247.7" r="0.5" fill="#fff0d8" opacity="0.88"></circle><circle cx="212.6" cy="138.5" r="0.5" fill="#9fc4ff" opacity="0.29"></circle><circle cx="118.5" cy="68.7" r="0.6" fill="#9fc4ff" opacity="0.86"></circle><circle cx="91.7" cy="98.8" r="0.4" fill="#9fc4ff" opacity="0.31"></circle><circle cx="126.9" cy="200.5" r="0.5" fill="#dbe8ff" opacity="0.69"></circle><circle cx="173.0" cy="75.2" r="0.5" fill="#b8d4ff" opacity="0.26"></circle><circle cx="125.0" cy="172.0" r="0.5" fill="#9fc4ff" opacity="0.59"></circle><circle cx="183.4" cy="174.4" r="0.5" fill="#b8d4ff" opacity="0.30"></circle><circle cx="268.1" cy="238.0" r="0.7" fill="#9fc4ff" opacity="0.79"></circle><circle cx="40.0" cy="77.7" r="0.5" fill="#dbe8ff" opacity="0.29"></circle><circle cx="74.3" cy="24.2" r="0.7" fill="#9fc4ff" opacity="0.94"></circle><circle cx="47.3" cy="141.8" r="0.55" fill="#fff0d8" opacity="0.56"></circle><circle cx="40.3" cy="242.1" r="0.55" fill="#ffffff" opacity="0.93"></circle><circle cx="294.3" cy="96.2" r="0.4" fill="#ffffff" opacity="0.76"></circle><circle cx="77.9" cy="54.5" r="0.5" fill="#fff0d8" opacity="0.57"></circle><circle cx="95.9" cy="166.2" r="0.55" fill="#b8d4ff" opacity="0.94"></circle><circle cx="270.6" cy="89.4" r="0.55" fill="#ffffff" opacity="0.66"></circle><circle cx="144.7" cy="128.1" r="0.6" fill="#9fc4ff" opacity="0.34"></circle><circle cx="175.4" cy="206.3" r="0.45" fill="#fff0d8" opacity="0.29"></circle><circle cx="257.2" cy="123.8" r="0.5" fill="#ffffff" opacity="0.74"></circle><circle cx="194.9" cy="1.0" r="0.5" fill="#ffffff" opacity="0.72"></circle><circle cx="98.5" cy="44.1" r="0.5" fill="#9fc4ff" opacity="0.48"></circle><circle cx="37.8" cy="128.9" r="0.7" fill="#b8d4ff" opacity="0.44"></circle><circle cx="206.4" cy="73.3" r="0.4" fill="#b8d4ff" opacity="0.79"></circle><circle cx="61.5" cy="229.7" r="0.4" fill="#9fc4ff" opacity="0.92"></circle><circle cx="146.3" cy="118.1" r="0.4" fill="#b8d4ff" opacity="0.74"></circle><circle cx="186.6" cy="238.9" r="0.5" fill="#ffffff" opacity="0.44"></circle><circle cx="66.4" cy="36.8" r="0.4" fill="#9fc4ff" opacity="0.36"></circle><circle cx="126.0" cy="92.0" r="0.5" fill="#dbe8ff" opacity="0.46"></circle><circle cx="159.7" cy="25.7" r="0.4" fill="#9fc4ff" opacity="0.50"></circle><circle cx="262.3" cy="12.6" r="0.6" fill="#b8d4ff" opacity="0.34"></circle><circle cx="206.1" cy="208.3" r="0.6" fill="#b8d4ff" opacity="0.39"></circle><circle cx="46.8" cy="241.8" r="0.4" fill="#9fc4ff" opacity="0.90"></circle><circle cx="147.8" cy="205.0" r="0.7" fill="#ffffff" opacity="0.89"></circle><circle cx="51.2" cy="170.7" r="0.4" fill="#b8d4ff" opacity="0.87"></circle><circle cx="260.4" cy="216.7" r="0.4" fill="#fff0d8" opacity="0.39"></circle><circle cx="71.7" cy="213.3" r="0.45" fill="#9fc4ff" opacity="0.32"></circle><circle cx="89.5" cy="31.3" r="0.4" fill="#b8d4ff" opacity="0.82"></circle><circle cx="132.1" cy="31.2" r="0.55" fill="#b8d4ff" opacity="0.53"></circle><circle cx="1.1" cy="138.5" r="0.55" fill="#fff0d8" opacity="0.42"></circle><circle cx="284.4" cy="173.6" r="0.45" fill="#ffffff" opacity="0.93"></circle><circle cx="144.5" cy="70.3" r="0.55" fill="#9fc4ff" opacity="0.94"></circle><circle cx="208.2" cy="104.2" r="0.4" fill="#ffffff" opacity="0.62"></circle><circle cx="280.6" cy="212.3" r="0.6" fill="#dbe8ff" opacity="0.52"></circle><circle cx="51.0" cy="181.5" r="0.55" fill="#ffffff" opacity="0.40"></circle><circle cx="72.7" cy="117.7" r="0.5" fill="#9fc4ff" opacity="0.81"></circle><circle cx="249.6" cy="104.1" r="0.6" fill="#b8d4ff" opacity="0.26"></circle><circle cx="40.1" cy="148.5" r="0.6" fill="#9fc4ff" opacity="0.88"></circle><circle cx="41.2" cy="76.0" r="0.45" fill="#9fc4ff" opacity="0.53"></circle><circle cx="8.5" cy="216.9" r="0.6" fill="#fff0d8" opacity="0.87"></circle><circle cx="266.0" cy="46.8" r="0.5" fill="#dbe8ff" opacity="0.83"></circle><circle cx="95.1" cy="50.4" r="0.5" fill="#fff0d8" opacity="0.79"></circle><circle cx="131.8" cy="33.9" r="0.5" fill="#b8d4ff" opacity="0.55"></circle><circle cx="227.1" cy="220.6" r="0.5" fill="#9fc4ff" opacity="0.46"></circle><circle cx="19.1" cy="169.2" r="0.55" fill="#dbe8ff" opacity="0.60"></circle><circle cx="166.5" cy="133.8" r="0.5" fill="#ffffff" opacity="0.57"></circle><circle cx="226.8" cy="120.0" r="0.45" fill="#fff0d8" opacity="0.77"></circle><circle cx="137.2" cy="110.3" r="0.4" fill="#ffffff" opacity="0.91"></circle><circle cx="170.9" cy="102.0" r="0.45" fill="#ffffff" opacity="0.73"></circle><circle cx="41.2" cy="127.2" r="0.6" fill="#dbe8ff" opacity="0.55"></circle><circle cx="31.7" cy="19.3" r="0.4" fill="#9fc4ff" opacity="0.86"></circle><circle cx="204.1" cy="205.4" r="0.7" fill="#9fc4ff" opacity="0.68"></circle><circle cx="189.8" cy="12.0" r="0.45" fill="#ffffff" opacity="0.49"></circle><circle cx="253.3" cy="235.9" r="0.55" fill="#dbe8ff" opacity="0.30"></circle><circle cx="14.0" cy="139.7" r="0.5" fill="#9fc4ff" opacity="0.84"></circle><circle cx="62.0" cy="51.2" r="0.4" fill="#ffffff" opacity="0.54"></circle><circle cx="242.2" cy="217.8" r="0.45" fill="#b8d4ff" opacity="0.70"></circle><circle cx="172.9" cy="61.6" r="0.55" fill="#9fc4ff" opacity="0.39"></circle><circle cx="84.0" cy="151.7" r="0.5" fill="#dbe8ff" opacity="0.43"></circle><circle cx="77.4" cy="217.4" r="0.6" fill="#9fc4ff" opacity="0.40"></circle><circle cx="103.7" cy="238.5" r="0.55" fill="#ffffff" opacity="0.27"></circle><circle cx="93.2" cy="28.3" r="0.4" fill="#dbe8ff" opacity="0.66"></circle><circle cx="72.6" cy="25.0" r="0.7" fill="#fff0d8" opacity="0.72"></circle><circle cx="81.9" cy="90.8" r="0.4" fill="#dbe8ff" opacity="0.83"></circle><circle cx="181.1" cy="233.8" r="0.55" fill="#9fc4ff" opacity="0.41"></circle><circle cx="97.2" cy="94.8" r="0.55" fill="#fff0d8" opacity="0.45"></circle><circle cx="259.2" cy="180.1" r="0.45" fill="#dbe8ff" opacity="0.72"></circle><circle cx="110.1" cy="108.5" r="0.7" fill="#b8d4ff" opacity="0.81"></circle><circle cx="155.4" cy="151.4" r="0.55" fill="#dbe8ff" opacity="0.27"></circle><circle cx="167.3" cy="138.2" r="0.45" fill="#9fc4ff" opacity="0.46"></circle><circle cx="131.9" cy="221.6" r="0.5" fill="#fff0d8" opacity="0.26"></circle><circle cx="155.5" cy="113.5" r="0.45" fill="#9fc4ff" opacity="0.92"></circle><circle cx="25.6" cy="57.0" r="0.5" fill="#ffffff" opacity="0.83"></circle><circle cx="58.0" cy="19.9" r="0.55" fill="#9fc4ff" opacity="0.75"></circle><circle cx="192.8" cy="150.1" r="0.55" fill="#fff0d8" opacity="0.80"></circle><circle cx="183.7" cy="73.9" r="0.5" fill="#9fc4ff" opacity="0.62"></circle><circle cx="64.6" cy="183.3" r="0.55" fill="#b8d4ff" opacity="0.90"></circle><circle cx="184.9" cy="137.2" r="0.7" fill="#b8d4ff" opacity="0.40"></circle><circle cx="111.8" cy="108.1" r="0.6" fill="#9fc4ff" opacity="0.87"></circle><circle cx="55.6" cy="238.5" r="0.55" fill="#b8d4ff" opacity="0.60"></circle><circle cx="186.4" cy="96.2" r="0.4" fill="#b8d4ff" opacity="0.33"></circle><circle cx="177.4" cy="179.6" r="0.55" fill="#fff0d8" opacity="0.41"></circle><circle cx="297.8" cy="121.6" r="0.7" fill="#9fc4ff" opacity="0.69"></circle><circle cx="108.5" cy="211.7" r="0.5" fill="#9fc4ff" opacity="0.31"></circle><circle cx="211.1" cy="107.0" r="0.6" fill="#dbe8ff" opacity="0.59"></circle><circle cx="117.5" cy="155.0" r="0.5" fill="#dbe8ff" opacity="0.37"></circle><circle cx="53.2" cy="178.1" r="0.45" fill="#dbe8ff" opacity="0.65"></circle><circle cx="299.0" cy="22.2" r="0.7" fill="#9fc4ff" opacity="0.57"></circle><circle cx="293.2" cy="227.1" r="0.5" fill="#fff0d8" opacity="0.30"></circle><circle cx="291.5" cy="213.8" r="0.5" fill="#ffffff" opacity="0.56"></circle><circle cx="184.0" cy="245.7" r="0.7" fill="#9fc4ff" opacity="0.64"></circle><circle cx="179.8" cy="80.8" r="0.55" fill="#b8d4ff" opacity="0.73"></circle><circle cx="164.2" cy="216.8" r="0.4" fill="#dbe8ff" opacity="0.89"></circle><circle cx="146.3" cy="72.0" r="0.45" fill="#dbe8ff" opacity="0.56"></circle><circle cx="131.3" cy="105.5" r="0.55" fill="#fff0d8" opacity="0.87"></circle><circle cx="186.0" cy="118.4" r="0.7" fill="#dbe8ff" opacity="0.90"></circle><circle cx="71.1" cy="244.2" r="0.55" fill="#b8d4ff" opacity="0.75"></circle><circle cx="76.4" cy="178.2" r="0.5" fill="#b8d4ff" opacity="0.60"></circle><circle cx="182.3" cy="155.6" r="0.5" fill="#fff0d8" opacity="0.86"></circle><circle cx="118.1" cy="105.7" r="0.45" fill="#9fc4ff" opacity="0.62"></circle><circle cx="130.4" cy="58.6" r="0.45" fill="#ffffff" opacity="0.77"></circle><circle cx="106.9" cy="30.8" r="0.55" fill="#b8d4ff" opacity="0.29"></circle><circle cx="290.8" cy="197.2" r="0.5" fill="#fff0d8" opacity="0.32"></circle><circle cx="5.9" cy="41.3" r="0.4" fill="#fff0d8" opacity="0.73"></circle><circle cx="94.5" cy="122.7" r="0.55" fill="#dbe8ff" opacity="0.70"></circle><circle cx="177.2" cy="227.6" r="0.6" fill="#fff0d8" opacity="0.67"></circle><circle cx="111.7" cy="119.9" r="0.4" fill="#fff0d8" opacity="0.54"></circle><circle cx="144.9" cy="50.1" r="0.5" fill="#fff0d8" opacity="0.78"></circle><circle cx="82.0" cy="146.9" r="0.4" fill="#ffffff" opacity="0.68"></circle><circle cx="56.2" cy="126.4" r="0.6" fill="#ffffff" opacity="0.32"></circle><circle cx="206.6" cy="146.5" r="0.7" fill="#ffffff" opacity="0.87"></circle><circle cx="100.0" cy="249.1" r="0.5" fill="#dbe8ff" opacity="0.39"></circle><circle cx="75.4" cy="185.8" r="0.4" fill="#ffffff" opacity="0.85"></circle><circle cx="25.3" cy="135.6" r="0.45" fill="#9fc4ff" opacity="0.88"></circle><circle cx="133.9" cy="36.8" r="0.6" fill="#9fc4ff" opacity="0.85"></circle><circle cx="186.6" cy="111.3" r="0.55" fill="#fff0d8" opacity="0.39"></circle><circle cx="235.7" cy="62.1" r="0.7" fill="#dbe8ff" opacity="0.82"></circle><circle cx="24.7" cy="55.7" r="0.55" fill="#b8d4ff" opacity="0.64"></circle><circle cx="2.3" cy="92.7" r="0.7" fill="#fff0d8" opacity="0.76"></circle><circle cx="77.6" cy="2.5" r="0.5" fill="#fff0d8" opacity="0.43"></circle><circle cx="197.6" cy="230.4" r="0.6" fill="#ffffff" opacity="0.54"></circle><circle cx="157.5" cy="89.1" r="0.5" fill="#b8d4ff" opacity="0.40"></circle><circle cx="2.0" cy="120.4" r="0.55" fill="#fff0d8" opacity="0.83"></circle><circle cx="219.6" cy="63.4" r="0.5" fill="#b8d4ff" opacity="0.26"></circle><circle cx="179.2" cy="107.7" r="0.6" fill="#9fc4ff" opacity="0.63"></circle><circle cx="235.1" cy="137.8" r="0.4" fill="#9fc4ff" opacity="0.59"></circle><circle cx="75.9" cy="74.5" r="0.55" fill="#b8d4ff" opacity="0.59"></circle><circle cx="46.8" cy="157.4" r="0.4" fill="#dbe8ff" opacity="0.53"></circle><circle cx="224.9" cy="34.1" r="0.55" fill="#b8d4ff" opacity="0.93"></circle><circle cx="218.4" cy="191.2" r="0.5" fill="#ffffff" opacity="0.71"></circle><circle cx="164.5" cy="117.1" r="0.5" fill="#9fc4ff" opacity="0.41"></circle><circle cx="230.2" cy="58.5" r="0.55" fill="#9fc4ff" opacity="0.26"></circle><circle cx="181.1" cy="131.3" r="0.45" fill="#dbe8ff" opacity="0.41"></circle><circle cx="86.2" cy="197.1" r="0.5" fill="#9fc4ff" opacity="0.57"></circle><circle cx="173.6" cy="119.6" r="0.5" fill="#9fc4ff" opacity="0.84"></circle><circle cx="109.8" cy="50.0" r="0.4" fill="#9fc4ff" opacity="0.83"></circle><circle cx="158.3" cy="146.4" r="0.4" fill="#dbe8ff" opacity="0.71"></circle><circle cx="191.0" cy="37.7" r="0.5" fill="#fff0d8" opacity="0.68"></circle><circle cx="270.2" cy="43.1" r="0.6" fill="#dbe8ff" opacity="0.25"></circle><circle cx="95.6" cy="78.4" r="0.5" fill="#9fc4ff" opacity="0.30"></circle><circle cx="189.7" cy="189.0" r="0.7" fill="#9fc4ff" opacity="0.64"></circle><circle cx="291.5" cy="112.2" r="0.5" fill="#b8d4ff" opacity="0.61"></circle><circle cx="94.2" cy="207.3" r="0.5" fill="#9fc4ff" opacity="0.41"></circle><circle cx="128.7" cy="70.3" r="0.7" fill="#fff0d8" opacity="0.44"></circle><circle cx="161.6" cy="196.5" r="0.4" fill="#ffffff" opacity="0.88"></circle><circle cx="237.3" cy="69.9" r="0.4" fill="#dbe8ff" opacity="0.71"></circle><circle cx="20.5" cy="74.6" r="0.6" fill="#9fc4ff" opacity="0.72"></circle><circle cx="250.1" cy="44.6" r="0.55" fill="#fff0d8" opacity="0.88"></circle><circle cx="67.5" cy="83.3" r="0.6" fill="#dbe8ff" opacity="0.45"></circle><circle cx="135.6" cy="191.7" r="0.55" fill="#9fc4ff" opacity="0.67"></circle><circle cx="125.9" cy="234.2" r="0.6" fill="#9fc4ff" opacity="0.30"></circle><circle cx="262.0" cy="44.9" r="0.5" fill="#ffffff" opacity="0.77"></circle><circle cx="179.8" cy="238.8" r="0.6" fill="#b8d4ff" opacity="0.60"></circle><circle cx="140.2" cy="51.4" r="0.7" fill="#dbe8ff" opacity="0.61"></circle><circle cx="256.4" cy="137.8" r="0.5" fill="#dbe8ff" opacity="0.66"></circle><circle cx="139.9" cy="88.0" r="0.55" fill="#b8d4ff" opacity="0.54"></circle><circle cx="57.2" cy="97.2" r="0.6" fill="#fff0d8" opacity="0.62"></circle><circle cx="246.2" cy="35.0" r="0.5" fill="#b8d4ff" opacity="0.71"></circle><circle cx="204.2" cy="247.6" r="0.6" fill="#dbe8ff" opacity="0.84"></circle><circle cx="58.6" cy="108.3" r="0.5" fill="#ffffff" opacity="0.37"></circle><circle cx="46.7" cy="96.4" r="0.5" fill="#b8d4ff" opacity="0.42"></circle><circle cx="108.6" cy="40.2" r="0.5" fill="#b8d4ff" opacity="0.71"></circle><circle cx="238.7" cy="88.5" r="0.6" fill="#dbe8ff" opacity="0.37"></circle><circle cx="263.9" cy="176.4" r="0.7" fill="#fff0d8" opacity="0.44"></circle><circle cx="279.1" cy="103.3" r="0.55" fill="#ffffff" opacity="0.57"></circle><circle cx="109.3" cy="82.0" r="0.55" fill="#fff0d8" opacity="0.50"></circle><circle cx="22.3" cy="105.7" r="0.5" fill="#ffffff" opacity="0.76"></circle><circle cx="189.7" cy="36.9" r="0.6" fill="#9fc4ff" opacity="0.47"></circle><circle cx="46.6" cy="144.2" r="0.6" fill="#b8d4ff" opacity="0.56"></circle><circle cx="158.3" cy="213.1" r="0.5" fill="#dbe8ff" opacity="0.49"></circle><circle cx="18.3" cy="185.4" r="0.6" fill="#ffffff" opacity="0.91"></circle><circle cx="247.2" cy="158.2" r="0.7" fill="#ffffff" opacity="0.60"></circle><circle cx="186.7" cy="156.8" r="0.5" fill="#dbe8ff" opacity="0.46"></circle><circle cx="125.8" cy="173.9" r="0.5" fill="#9fc4ff" opacity="0.27"></circle><circle cx="226.5" cy="229.6" r="0.6" fill="#fff0d8" opacity="0.32"></circle><circle cx="23.8" cy="35.0" r="0.5" fill="#fff0d8" opacity="0.36"></circle><circle cx="235.5" cy="126.6" r="0.55" fill="#b8d4ff" opacity="0.47"></circle><circle cx="8.3" cy="205.2" r="0.5" fill="#ffffff" opacity="0.38"></circle><circle cx="196.4" cy="132.0" r="0.7" fill="#ffffff" opacity="0.36"></circle><circle cx="136.7" cy="211.7" r="0.5" fill="#9fc4ff" opacity="0.95"></circle><circle cx="40.5" cy="66.9" r="0.45" fill="#dbe8ff" opacity="0.58"></circle><circle cx="281.5" cy="114.2" r="0.6" fill="#ffffff" opacity="0.62"></circle><circle cx="88.2" cy="28.2" r="0.7" fill="#b8d4ff" opacity="0.52"></circle><circle cx="85.9" cy="195.4" r="0.55" fill="#b8d4ff" opacity="0.78"></circle><circle cx="117.7" cy="0.5" r="0.4" fill="#fff0d8" opacity="0.74"></circle><circle cx="288.5" cy="219.6" r="0.55" fill="#ffffff" opacity="0.95"></circle><circle cx="161.8" cy="170.4" r="0.4" fill="#9fc4ff" opacity="0.65"></circle><circle cx="188.3" cy="24.3" r="0.5" fill="#dbe8ff" opacity="0.56"></circle><circle cx="247.2" cy="122.4" r="0.45" fill="#ffffff" opacity="0.62"></circle><circle cx="211.3" cy="185.3" r="0.55" fill="#fff0d8" opacity="0.37"></circle><circle cx="290.8" cy="192.4" r="0.5" fill="#9fc4ff" opacity="0.76"></circle><circle cx="290.5" cy="96.9" r="0.5" fill="#fff0d8" opacity="0.78"></circle><circle cx="7.7" cy="117.2" r="0.5" fill="#dbe8ff" opacity="0.88"></circle><circle cx="258.3" cy="126.7" r="0.6" fill="#ffffff" opacity="0.57"></circle><circle cx="278.9" cy="153.8" r="0.5" fill="#ffffff" opacity="0.45"></circle><circle cx="123.5" cy="44.8" r="0.45" fill="#fff0d8" opacity="0.89"></circle><circle cx="154.7" cy="9.6" r="0.55" fill="#fff0d8" opacity="0.75"></circle><circle cx="195.3" cy="45.1" r="0.4" fill="#9fc4ff" opacity="0.38"></circle><circle cx="51.7" cy="52.7" r="0.5" fill="#dbe8ff" opacity="0.44"></circle><circle cx="261.4" cy="79.2" r="0.6" fill="#dbe8ff" opacity="0.29"></circle><circle cx="75.5" cy="237.9" r="0.5" fill="#dbe8ff" opacity="0.90"></circle><circle cx="278.2" cy="162.3" r="0.5" fill="#b8d4ff" opacity="0.92"></circle><circle cx="287.2" cy="70.8" r="0.4" fill="#9fc4ff" opacity="0.77"></circle><circle cx="16.9" cy="45.9" r="0.5" fill="#9fc4ff" opacity="0.37"></circle><circle cx="54.2" cy="187.9" r="0.5" fill="#9fc4ff" opacity="0.76"></circle><circle cx="33.4" cy="9.6" r="0.5" fill="#dbe8ff" opacity="0.34"></circle><circle cx="77.4" cy="192.2" r="0.7" fill="#dbe8ff" opacity="0.84"></circle><circle cx="117.1" cy="120.2" r="0.7" fill="#b8d4ff" opacity="0.37"></circle><circle cx="293.6" cy="210.4" r="0.6" fill="#dbe8ff" opacity="0.36"></circle><circle cx="228.7" cy="67.0" r="0.4" fill="#ffffff" opacity="0.57"></circle><circle cx="291.1" cy="227.2" r="0.55" fill="#9fc4ff" opacity="0.82"></circle><circle cx="222.0" cy="162.3" r="0.7" fill="#fff0d8" opacity="0.84"></circle><circle cx="150.8" cy="244.2" r="0.5" fill="#dbe8ff" opacity="0.54"></circle><circle cx="191.2" cy="197.1" r="0.55" fill="#dbe8ff" opacity="0.56"></circle><circle cx="81.5" cy="224.1" r="0.7" fill="#ffffff" opacity="0.49"></circle><circle cx="89.2" cy="115.7" r="0.6" fill="#9fc4ff" opacity="0.64"></circle><circle cx="227.8" cy="42.1" r="0.6" fill="#dbe8ff" opacity="0.75"></circle><circle cx="255.7" cy="242.8" r="0.6" fill="#ffffff" opacity="0.45"></circle><circle cx="96.2" cy="13.8" r="0.7" fill="#dbe8ff" opacity="0.72"></circle><circle cx="235.9" cy="15.8" r="0.5" fill="#ffffff" opacity="0.92"></circle><circle cx="89.1" cy="206.0" r="0.45" fill="#b8d4ff" opacity="0.69"></circle><circle cx="135.3" cy="12.6" r="0.4" fill="#9fc4ff" opacity="0.70"></circle><circle cx="181.3" cy="135.6" r="0.4" fill="#fff0d8" opacity="0.59"></circle><circle cx="156.9" cy="76.1" r="0.45" fill="#9fc4ff" opacity="0.64"></circle><circle cx="145.0" cy="91.7" r="0.55" fill="#b8d4ff" opacity="0.94"></circle><circle cx="57.8" cy="108.7" r="0.5" fill="#dbe8ff" opacity="0.77"></circle><circle cx="281.9" cy="126.4" r="0.5" fill="#9fc4ff" opacity="0.81"></circle><circle cx="183.6" cy="191.0" r="0.5" fill="#b8d4ff" opacity="0.80"></circle><circle cx="1.3" cy="88.0" r="0.45" fill="#dbe8ff" opacity="0.34"></circle><circle cx="275.6" cy="168.3" r="0.5" fill="#9fc4ff" opacity="0.78"></circle><circle cx="241.9" cy="132.9" r="0.5" fill="#ffffff" opacity="0.51"></circle><circle cx="72.7" cy="95.2" r="0.5" fill="#ffffff" opacity="0.46"></circle><circle cx="129.4" cy="76.7" r="0.55" fill="#fff0d8" opacity="0.79"></circle><circle cx="254.2" cy="225.5" r="0.5" fill="#b8d4ff" opacity="0.58"></circle><circle cx="7.3" cy="229.3" r="0.5" fill="#9fc4ff" opacity="0.32"></circle><circle cx="23.7" cy="19.6" r="0.4" fill="#dbe8ff" opacity="0.58"></circle><circle cx="282.6" cy="229.0" r="0.55" fill="#b8d4ff" opacity="0.50"></circle><circle cx="233.2" cy="126.8" r="0.7" fill="#fff0d8" opacity="0.40"></circle><circle cx="169.9" cy="42.7" r="0.45" fill="#fff0d8" opacity="0.66"></circle><circle cx="129.7" cy="72.2" r="0.55" fill="#ffffff" opacity="0.28"></circle><circle cx="36.0" cy="25.8" r="0.5" fill="#9fc4ff" opacity="0.40"></circle><circle cx="172.7" cy="54.1" r="0.45" fill="#dbe8ff" opacity="0.49"></circle><circle cx="167.6" cy="235.6" r="0.4" fill="#ffffff" opacity="0.67"></circle><circle cx="25.6" cy="156.6" r="0.4" fill="#9fc4ff" opacity="0.90"></circle><circle cx="132.2" cy="96.6" r="0.45" fill="#9fc4ff" opacity="0.26"></circle><circle cx="107.0" cy="79.0" r="0.5" fill="#9fc4ff" opacity="0.61"></circle><circle cx="175.6" cy="123.5" r="0.7" fill="#ffffff" opacity="0.47"></circle><circle cx="144.4" cy="149.1" r="0.45" fill="#b8d4ff" opacity="0.37"></circle><circle cx="288.3" cy="9.2" r="0.6" fill="#dbe8ff" opacity="0.89"></circle><circle cx="208.9" cy="237.5" r="0.6" fill="#9fc4ff" opacity="0.57"></circle><circle cx="56.0" cy="44.6" r="0.55" fill="#dbe8ff" opacity="0.43"></circle><circle cx="172.2" cy="0.4" r="0.45" fill="#ffffff" opacity="0.42"></circle><circle cx="162.7" cy="33.2" r="0.5" fill="#dbe8ff" opacity="0.81"></circle><circle cx="237.0" cy="170.2" r="0.55" fill="#b8d4ff" opacity="0.68"></circle><circle cx="165.9" cy="58.4" r="0.45" fill="#b8d4ff" opacity="0.59"></circle><circle cx="17.2" cy="145.3" r="0.4" fill="#dbe8ff" opacity="0.70"></circle><circle cx="287.7" cy="36.6" r="0.55" fill="#ffffff" opacity="0.69"></circle><circle cx="127.0" cy="106.8" r="0.45" fill="#ffffff" opacity="0.47"></circle><circle cx="251.2" cy="120.1" r="0.4" fill="#fff0d8" opacity="0.56"></circle><circle cx="95.7" cy="183.3" r="0.5" fill="#fff0d8" opacity="0.87"></circle><circle cx="299.1" cy="113.7" r="0.7" fill="#ffffff" opacity="0.49"></circle><circle cx="105.6" cy="185.1" r="0.5" fill="#fff0d8" opacity="0.81"></circle><circle cx="128.2" cy="73.0" r="0.4" fill="#fff0d8" opacity="0.43"></circle><circle cx="239.0" cy="10.4" r="0.55" fill="#b8d4ff" opacity="0.89"></circle><circle cx="207.8" cy="185.2" r="0.6" fill="#9fc4ff" opacity="0.58"></circle><circle cx="243.4" cy="231.5" r="0.5" fill="#9fc4ff" opacity="0.62"></circle><circle cx="90.0" cy="47.5" r="0.55" fill="#dbe8ff" opacity="0.65"></circle><circle cx="214.2" cy="159.0" r="0.4" fill="#dbe8ff" opacity="0.47"></circle><circle cx="185.7" cy="99.1" r="0.6" fill="#b8d4ff" opacity="0.75"></circle><circle cx="33.4" cy="172.4" r="0.5" fill="#9fc4ff" opacity="0.31"></circle><circle cx="133.0" cy="207.0" r="0.45" fill="#9fc4ff" opacity="0.60"></circle><circle cx="78.5" cy="172.9" r="0.5" fill="#fff0d8" opacity="0.43"></circle><circle cx="241.6" cy="249.5" r="0.4" fill="#ffffff" opacity="0.94"></circle><circle cx="69.6" cy="204.6" r="0.7" fill="#fff0d8" opacity="0.41"></circle><circle cx="269.4" cy="40.7" r="0.45" fill="#ffffff" opacity="0.66"></circle><circle cx="19.9" cy="14.3" r="0.45" fill="#fff0d8" opacity="0.68"></circle><circle cx="88.1" cy="76.6" r="1.0" fill="#e8f2ff"></circle><circle cx="293.0" cy="23.4" r="1.4" fill="#8ab8ff"></circle><circle cx="221.9" cy="239.1" r="1.4" fill="#8ab8ff"></circle><circle cx="90.1" cy="238.2" r="1.2" fill="#8ab8ff"></circle><circle cx="203.9" cy="152.8" r="1.2" fill="#e8f2ff"></circle><circle cx="18.0" cy="96.6" r="1.2" fill="#e8f2ff"></circle><circle cx="37.0" cy="128.4" r="1.2" fill="#8ab8ff"></circle><circle cx="24.7" cy="165.2" r="1.0" fill="#e8f2ff"></circle><circle cx="224.4" cy="133.1" r="1.4" fill="#ffffff"></circle><circle cx="263.3" cy="37.0" r="1.4" fill="#e8f2ff"></circle><circle cx="152.3" cy="199.0" r="1.0" fill="#ffffff"></circle><circle cx="56.5" cy="115.0" r="1.0" fill="#ffffff"></circle><circle cx="88.5" cy="134.3" r="1.4" fill="#e8f2ff"></circle><circle cx="23.9" cy="80.2" r="1.4" fill="#e8f2ff"></circle><circle cx="263.3" cy="15.4" r="1.0" fill="#8ab8ff"></circle><circle cx="278.0" cy="143.6" r="1.4" fill="#e8f2ff"></circle><circle cx="2.6" cy="16.9" r="1.4" fill="#ffffff"></circle><circle cx="275.8" cy="31.7" r="1.4" fill="#ffffff"></circle><circle cx="109.5" cy="211.8" r="1.4" fill="#ffffff"></circle><circle cx="252.8" cy="38.8" r="1.4" fill="#e8f2ff"></circle><circle cx="68.6" cy="52.9" r="1.4" fill="#e8f2ff"></circle><circle cx="4.5" cy="211.4" r="1.4" fill="#e8f2ff"></circle></g>
<text x="1250" y="459" font-family="Liberation Sans" font-weight="bold" font-size="35" textLength="254" lengthAdjust="spacingAndGlyphs" fill="#f7c61a" stroke="#f7c61a" stroke-width="7.5" stroke-linejoin="round">Yahoo! JAPAN</text>
<text x="1250" y="459" font-family="Liberation Sans" font-weight="bold" font-size="35" textLength="254" lengthAdjust="spacingAndGlyphs" fill="#0a141a" stroke="#0a141a" stroke-width="1.6" stroke-linejoin="round">Yahoo! JAPAN</text>
<g fill="none" stroke-linecap="square" stroke-linejoin="miter">
<path d="M1301 490H1351L1346 513Q1344 518 1333 517 M1325 469L1320 493Q1315 511 1301 518 M1361 495H1411 M1422 468V519 M1428 487L1455 502" stroke="#f7c61a" stroke-width="16"></path>
<path d="M1301 490H1351L1346 513Q1344 518 1333 517 M1325 469L1320 493Q1315 511 1301 518 M1361 495H1411 M1422 468V519 M1428 487L1455 502" stroke="#0e2026" stroke-width="9.5"></path>
<path d="M1437 466L1442 477 M1449 464L1454 475" stroke="#f7c61a" stroke-width="9.5"></path>
<path d="M1437 466L1442 477 M1449 464L1454 475" stroke="#0e2026" stroke-width="4"></path>
</g>
</svg>
<div class="j" style="left:1231px;top:623.5px;width:171.0px;font-size:13.2px;line-height:16px;color:#1a3bd6;font-weight:bold">アクセスランキング（国内）</div>
<div class="a" style="left:1227px;top:648px;width:300px;height:1px;background:#e0e0e0"></div>
<div class="a" style="left:1227px;top:723px;width:300px;height:1px;background:#e0e0e0"></div>
<div class="a" style="left:1227px;top:799px;width:300px;height:1px;background:#e0e0e0"></div>
<div class="a" style="left:1227px;top:887px;width:300px;height:1px;background:#e0e0e0"></div>
<div class="a" style="left:1227px;top:958px;width:300px;height:1px;background:#e0e0e0"></div>
<div class="a" style="left:1227px;top:1033px;width:300px;height:1px;background:#e0e0e0"></div>
<div class="a" style="left:1227px;top:1148px;width:300px;height:1px;background:#e0e0e0"></div>
<div class="t" style="left:1234px;top:660.0px;font-size:19px;line-height:20px;color:#333;font-weight:bold;font-style:italic">1</div>
<div class="t" style="left:1234px;top:735.0px;font-size:19px;line-height:20px;color:#333;font-weight:bold;font-style:italic">2</div>
<div class="t" style="left:1234px;top:811.0px;font-size:19px;line-height:20px;color:#333;font-weight:bold;font-style:italic">3</div>
<div class="t" style="left:1234px;top:899.0px;font-size:19px;line-height:20px;color:#333;font-weight:bold;font-style:italic">4</div>
<div class="t" style="left:1234px;top:970.0px;font-size:19px;line-height:20px;color:#333;font-weight:bold;font-style:italic">5</div>
<div class="j" style="left: 1256.5px; top: 657.6px; font-size: 13px; line-height: 16px; color: rgb(26, 59, 214); width: 195px;">新幹線で火災、男女２人死亡　車</div>
<div class="j" style="left: 1256.5px; top: 678.4px; font-size: 13px; line-height: 16px; color: rgb(26, 59, 214); width: 190px;">内で油まく　複数けが<span style="color:#666;font-size:12px">　朝日新聞</span></div>
<div class="j" style="left: 1256.5px; top: 698.4px; font-size: 12px; line-height: 16px; color: rgb(102, 102, 102); width: 168.05px;">デジタル　6月30日(火)12時7分</div>
<div class="j" style="left: 1256.5px; top: 733px; font-size: 13px; line-height: 16px; color: rgb(26, 59, 214); width: 182px;">「熱い」「助けて」逃げる乗客</div>
<div class="j" style="left: 1256.5px; top: 753.5px; font-size: 13px; line-height: 16px; color: rgb(26, 59, 214); width: 189px;">新幹線火災、その時<span style="color:#666;font-size:12px">　朝日新聞デ</span></div>
<div class="j" style="left: 1256.5px; top: 774.4px; font-size: 12px; line-height: 16px; color: rgb(102, 102, 102); width: 156.05px;">ジタル　6月30日(火)14時0分</div>
<div class="j" style="left: 1256.5px; top: 808px; font-size: 13px; line-height: 16px; color: rgb(123, 63, 166); width: 182px;">東海道新幹線火災　「お金あげ</div>
<div class="j" style="left: 1256.5px; top: 825px; font-size: 13px; line-height: 16px; color: rgb(123, 63, 166); width: 195px;">る」…死亡の男は都内の７１歳か</div>
<div class="j" style="left: 1256.5px; top: 842px; font-size: 13px; line-height: 16px; color: rgb(123, 63, 166); width: 208px;">通路うろうろ、目の前で液体かける</div>
<div class="j" style="left: 1256.5px; top: 862px; font-size: 12px; line-height: 16px; color: rgb(102, 102, 102); width: 174.72px;">産経新聞　6月30日(火)16時54分</div>
<div class="j" style="left: 1256.5px; top: 897.3px; font-size: 13px; line-height: 16px; color: rgb(26, 59, 214); width: 261.47px;">新幹線で火災、1人死亡＝1号車、男性油かぶ</div>
<div class="j" style="left: 1256.5px; top: 917.3px; font-size: 13px; line-height: 16px; color: rgb(26, 59, 214); width: 256.81px;">り火―1人心肺停止・JR東海<span style="color:#666;font-size:12px">　時事通信　6月</span></div>
<div class="j" style="left: 1256.5px; top: 933.9px; font-size: 12px; line-height: 16px; color: rgb(102, 102, 102); width: 89.38px;">30日(火)13時9分</div>
<div class="j" style="left: 1256.5px; top: 967.5px; font-size: 13px; line-height: 16px; color: rgb(26, 59, 214); width: 260px;">安保批判報道「懲らしめる」＝自民・大西氏</div>
<div class="j" style="left: 1256.5px; top: 987.2px; font-size: 13px; line-height: 16px; color: rgb(26, 59, 214); width: 256px;">が再び問題発言―与党幹部が不快感<span style="color:#666;font-size:12px">　時事通</span></div>
<div class="j" style="left: 1256.5px; top: 1008.5px; font-size: 12px; line-height: 16px; color: rgb(102, 102, 102); width: 138.72px;">信　6月30日(火)14時45分</div>
<div class="t" style="left:1230px;top:1043.0px;font-size:14px;line-height:16px;color:#333;font-weight:bold;font-style:italic">PR</div>
<div class="j" style="left: 1256.5px; top: 1042.7px; font-size: 13px; line-height: 16px; color: rgb(26, 59, 214); width: 195px;">塗装なし腐らないウッドデッキ｜</div>
<div class="j" style="left: 1256.5px; top: 1059.5px; font-size: 13px; line-height: 16px; color: rgb(26, 59, 214); width: 178.19px;">人工木材「Eee-Wood」は、ま</div>
<div class="j" style="left: 1256.5px; top: 1076px; font-size: 13px; line-height: 16px; color: rgb(26, 59, 214); width: 185.63px;">るで本物の木!お手入れ簡単しか</div>
<div class="j" style="left: 1256.5px; top: 1092.8px; font-size: 13px; line-height: 16px; color: rgb(26, 59, 214); width: 78px;">も塗装要らず</div>
<div class="t" style="left:1256.5px;top:1110.0px;font-size:12.5px;line-height:16px;color:#666;">www.art-deco.jp</div>
<div class="t" style="left:1402px;top:1129.5px;font-size:12px;line-height:14px;color:#999;">Ads by Yahoo! JAPAN</div>
<div class="j" style="left: 1233px; top: 1174px; font-size: 12.8px; line-height: 16px; color: rgb(26, 59, 214); font-weight: bold; width: 185.56px;">ニュースの深層に迫る 有料配信</div>
<svg class="a" style="left:1467px;top:657px" width="60" height="40" viewBox="0 0 60 40"><rect width="60" height="40" fill="#5a7a48"></rect><path d="M0 0h60v18L0 4z" fill="#3e6a34"></path><path d="M0 20l60 10v10H0z" fill="#7a8a5a"></path><path d="M0 30h60v10H0z" fill="#8a7a62"></path><path d="M0 6l60 14v8L0 14z" fill="#9aa0a4"></path><path d="M2 9l58 13v5L4 14z" fill="#f4f6fa"></path><path d="M6 12l54 12v2L6 14z" fill="#3850a0"></path><path d="M0 14l60 14v4L0 18z" fill="#8c9296"></path></svg><svg class="a" style="left:1467px;top:731px" width="60" height="32" viewBox="0 0 60 32"><rect width="60" height="32" fill="#fafafa"></rect><rect x="1" y="1" width="36" height="2" fill="#444"></rect><rect x="1" y="4" width="26" height="1" fill="#999"></rect><rect x="17" y="7" width="26" height="2.5" fill="#555"></rect><path d="M2 16c2-4 8-5 18-5h36v8H20C8 19 3 18 2 16z" fill="#fff" stroke="#555" stroke-width="0.6"></path><rect x="20" y="11" width="36" height="8" fill="#b8b8b8"></rect><rect x="20" y="11" width="4" height="8" fill="#d44"></rect><rect x="52" y="12" width="3" height="6" fill="#d44"></rect><rect x="2" y="22" width="24" height="1.5" fill="#666"></rect><rect x="40" y="21" width="15" height="2.5" fill="#555"></rect><rect x="2" y="28" width="30" height="1.5" fill="#777"></rect><rect x="46" y="28" width="12" height="1" fill="#999"></rect></svg><svg class="a" style="left:1488px;top:808px" width="39" height="60" viewBox="0 0 39 60"><g transform="scale(0.3)"><use href="#photoG"></use></g></svg><svg class="a" style="left:1467px;top:1042px" width="60" height="45" viewBox="0 0 60 45"><defs><filter id="b4"><feGaussianBlur stdDeviation="0.6"></feGaussianBlur></filter></defs><g filter="url(#b4)"><rect width="60" height="45" fill="#6a6660"></rect><rect x="0" y="2" width="11" height="26" fill="#c8ccc8"></rect><rect x="11" y="0" width="30" height="45" fill="#7c7a72"></rect><rect x="42" y="0" width="18" height="33" fill="#e4e8ec"></rect><rect x="11" y="11" width="30" height="5" fill="#8a4a28"></rect><rect x="18" y="20" width="13" height="8" fill="#1a1a1a"></rect><rect x="20" y="23" width="7" height="4" fill="#ddd"></rect><rect x="22" y="2" width="4" height="8" fill="#5a1a1a"></rect><circle cx="24" cy="3" r="3" fill="#c02838"></circle><rect x="0" y="30" width="60" height="15" fill="#5e584e"></rect><path d="M0 34c6-4 20-4 26 2v9H0z" fill="#6a5a48"></path><rect x="51" y="24" width="9" height="21" fill="#8a3a1a"></rect><circle cx="17" cy="24" r="1.8" fill="#d03040"></circle></g></svg>
<div class="a" style="left:1909px;top:126px;width:8px;height:307px;border-radius:4px;background:#c1c1c1"></div>
<div id="scroll" class="a"></div>
<div id="bottom" class="a"></div>

</body></html>
